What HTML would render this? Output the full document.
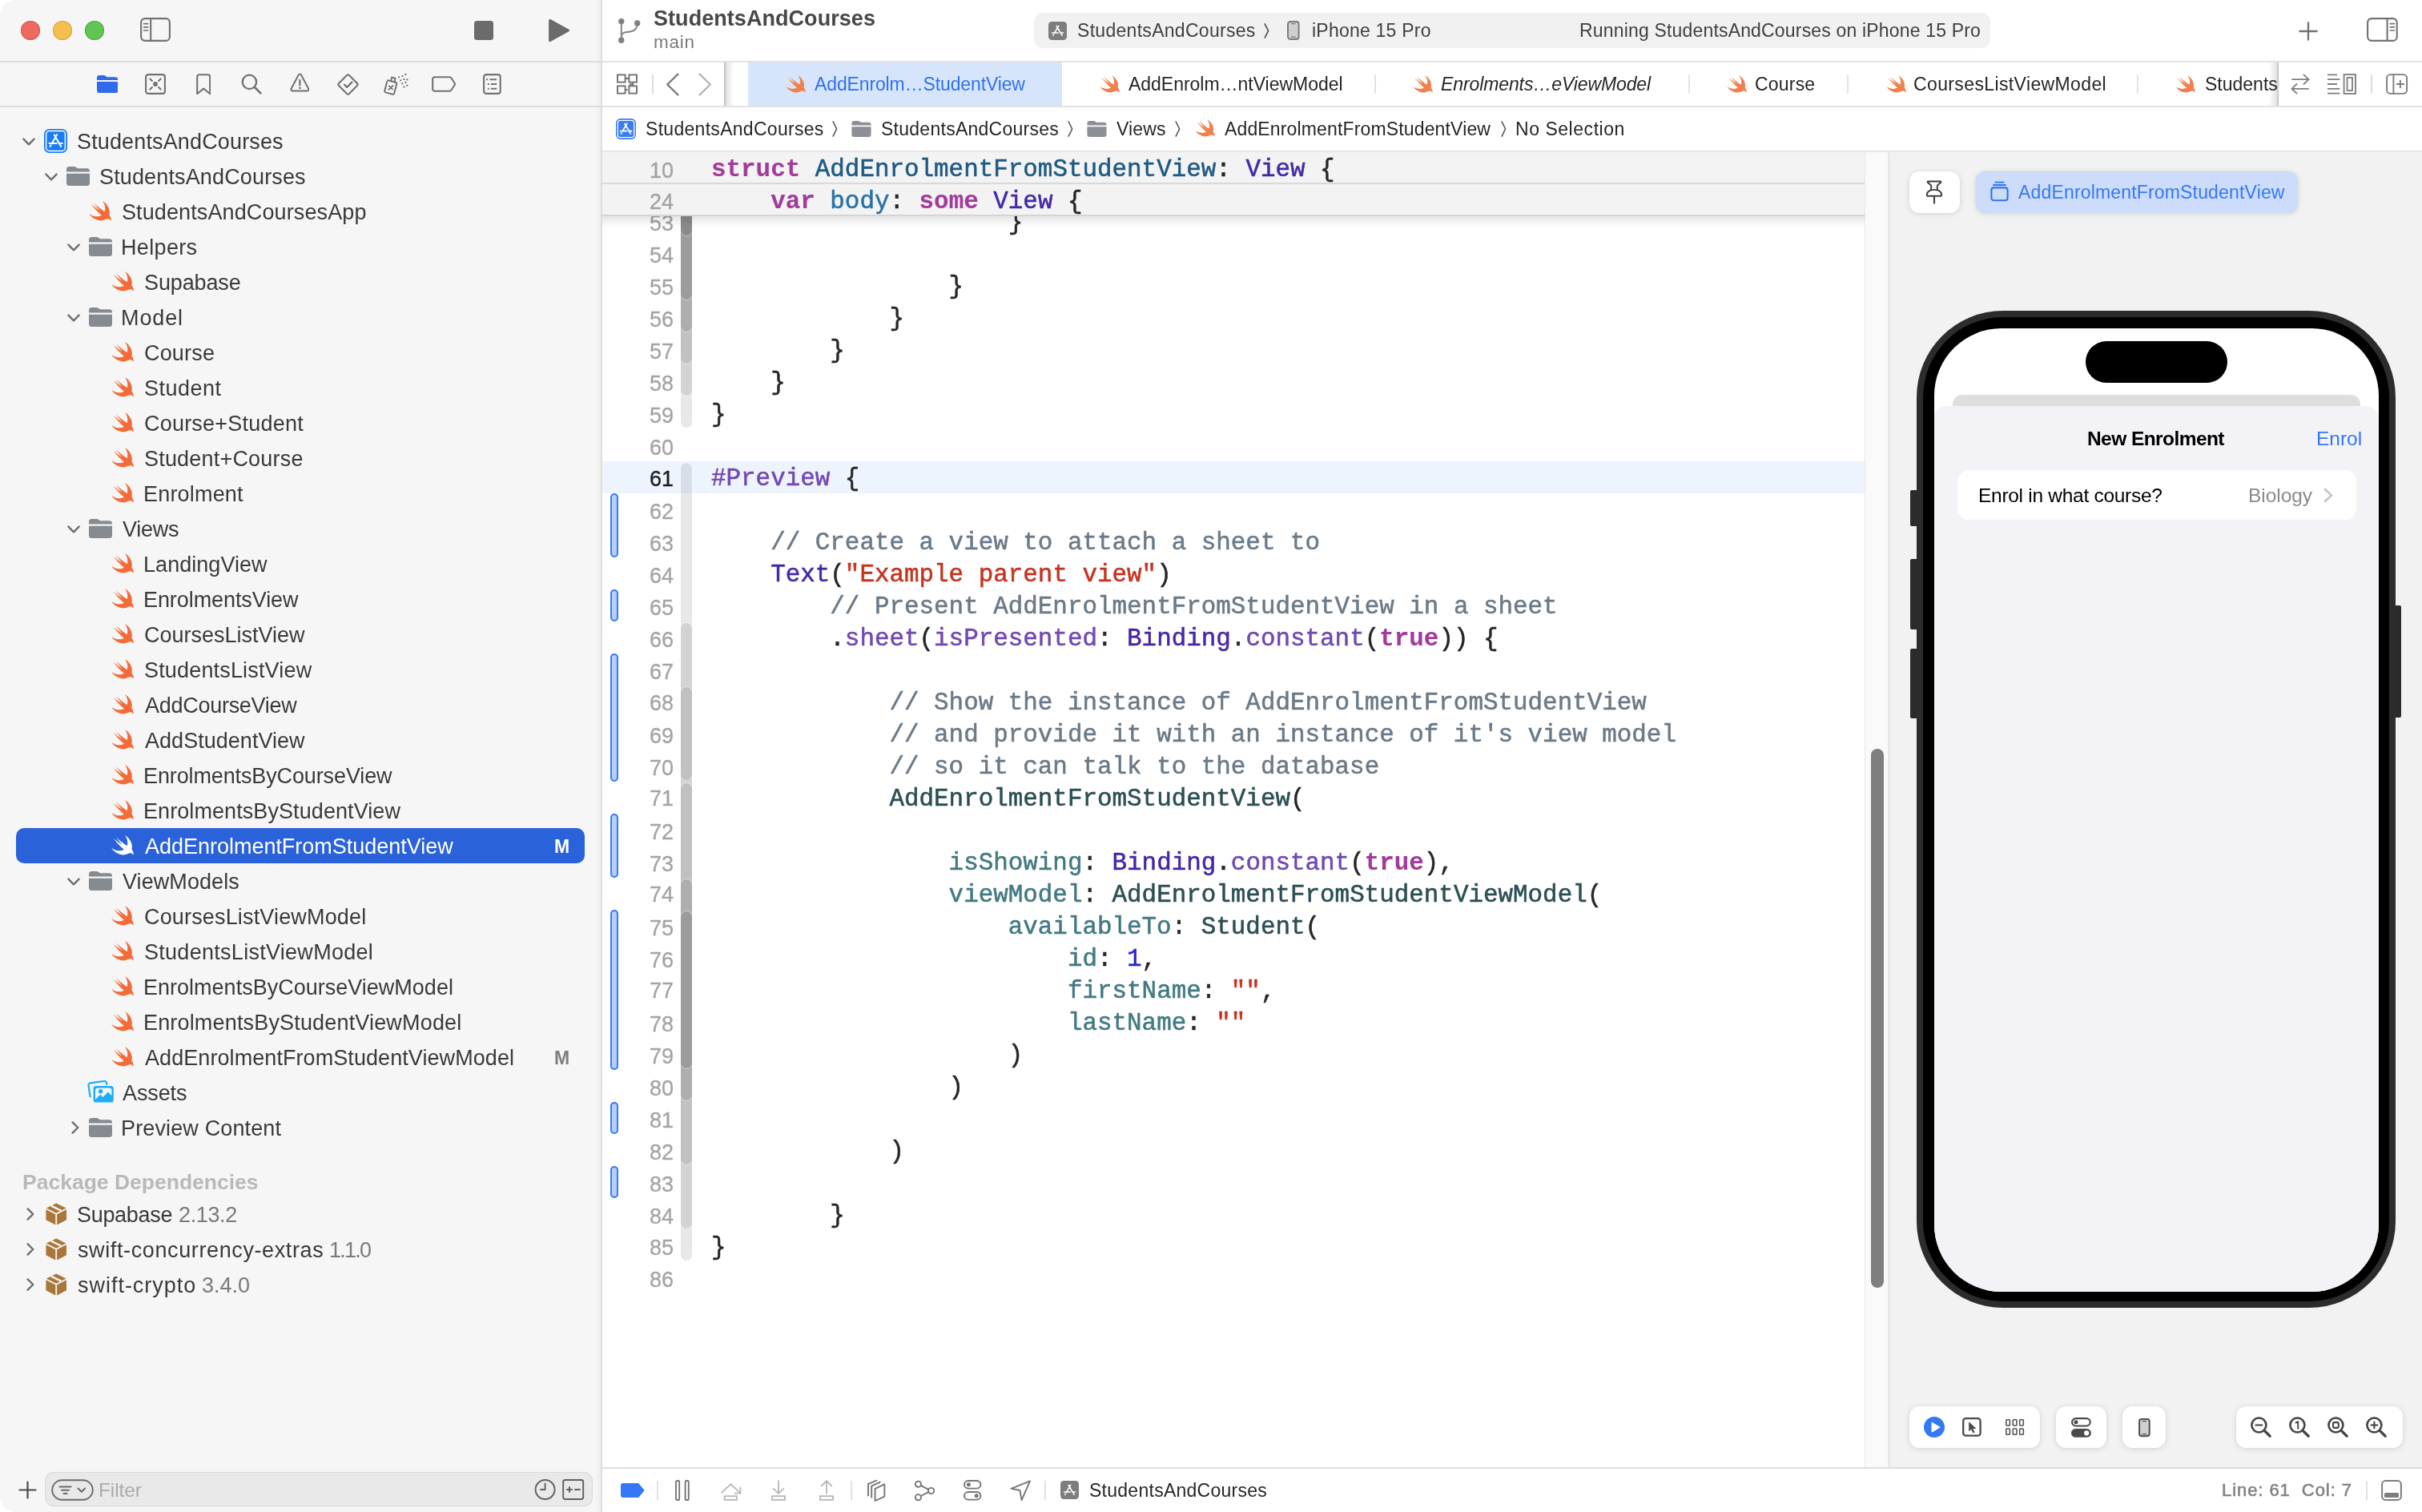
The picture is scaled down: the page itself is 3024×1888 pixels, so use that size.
<!DOCTYPE html>
<html lang="en"><head><meta charset="utf-8"><title>StudentsAndCourses — AddEnrolmentFromStudentView.swift</title>
<style>
html,body{margin:0;padding:0;background:#fff;}
body{width:3024px;height:1888px;overflow:hidden;position:relative;font-family:"Liberation Sans",sans-serif;-webkit-font-smoothing:antialiased;}
.b{position:absolute;display:block;}
.t{position:absolute;white-space:pre;will-change:transform;}
.code,.ln{will-change:transform;}
.code{position:absolute;left:888px;white-space:pre;font-family:"Liberation Mono",monospace;font-size:30.9px;line-height:40px;height:40px;color:#262626;-webkit-text-stroke:0.55px;}
.ln{position:absolute;width:89px;left:752px;text-align:right;font-size:27px;line-height:40px;height:40px;color:#a2a2a2;-webkit-text-stroke:0.35px;}
.kw{color:#a33b9b;font-weight:bold;-webkit-text-stroke:0.15px;}
.ty{color:#1f5a82;} .dc{color:#2a72a8;} .sc{color:#4628a5;} .fn{color:#7249b2;} .cm{color:#6b7a87;}
.st{color:#c53420;} .nu{color:#2b25cf;} .pt{color:#2b4f54;} .pf{color:#437a82;}
</style></head><body>

<div class="b" style="left:0px;top:0px;width:751px;height:1888px;background:#f6f6f6;border-radius:20px 0 0 20px;"></div>
<div class="b" style="left:743px;top:0px;width:8px;height:1888px;background:linear-gradient(to right,rgba(0,0,0,0),rgba(0,0,0,0.045));"></div>
<div class="b" style="left:750px;top:0px;width:2px;height:1888px;background:#dedede;"></div>
<div class="b" style="left:0px;top:76px;width:750px;height:2px;background:#dcdcdc;"></div>
<div class="b" style="left:0px;top:132px;width:750px;height:2px;background:#dcdcdc;"></div>
<div class="b" style="left:26px;top:26px;width:24px;height:24px;background:#ec6a5e;border-radius:50%;box-shadow:inset 0 0 0 1px #d5584d;"></div>
<div class="b" style="left:66px;top:26px;width:24px;height:24px;background:#f5bf4f;border-radius:50%;box-shadow:inset 0 0 0 1px #d8a23a;"></div>
<div class="b" style="left:106px;top:26px;width:24px;height:24px;background:#61c554;border-radius:50%;box-shadow:inset 0 0 0 1px #4fa93f;"></div>
<svg class="b" style="left:54.5px;top:161px" width="29" height="30" viewBox="0 0 29 30"><rect x="0" y="0" width="29" height="30" rx="6.5" fill="#1a7cf6"/><rect x="2.6" y="2.6" width="23.8" height="24.8" rx="4" fill="none" stroke="#fff" stroke-width="1.5"/><g fill="none" stroke="#fff" stroke-width="2" stroke-linecap="round"><path d="M16 7.2 9.6 18.4M8.4 20.6l-.8 1.4M12.8 7.4l8.4 14.6M6.4 18h9.4M19.6 18h3.2"/></g></svg>
<svg class="b" style="left:28px;top:172px" width="16" height="10" viewBox="0 0 16 10"><path fill="none" stroke="#6e6e6e" stroke-width="2.4" stroke-linecap="round" stroke-linejoin="round" d="M1.4 1.6 8 8.3l6.6-6.7"/></svg>
<div class="t " style="left:95.8px;top:161.4px;font-size:27px;line-height:32px;color:#3a3a3a;letter-spacing:0.142px;">StudentsAndCourses</div>
<svg class="b" style="left:83px;top:208px" width="29" height="24" viewBox="0 0 29 24"><path fill="#858b91" d="M3.5 0h6.2c1 0 1.7.3 2.5.9l1 .8c.5.4 1 .5 1.7.5H25.5A3.5 3.5 0 0 1 29 5.7V6.6H0V3.5A3.5 3.5 0 0 1 3.5 0zM0 8.8h29v11.7A3.5 3.5 0 0 1 25.5 24h-22A3.5 3.5 0 0 1 0 20.5z"/></svg>
<svg class="b" style="left:56px;top:216px" width="16" height="10" viewBox="0 0 16 10"><path fill="none" stroke="#6e6e6e" stroke-width="2.4" stroke-linecap="round" stroke-linejoin="round" d="M1.4 1.6 8 8.3l6.6-6.7"/></svg>
<div class="t " style="left:123.8px;top:205.4px;font-size:27px;line-height:32px;color:#3a3a3a;letter-spacing:0.142px;">StudentsAndCourses</div>
<svg class="b" style="left:110.8px;top:251px" width="28" height="25" viewBox="2.35 3.35 18.4 16.6" preserveAspectRatio="none"><path fill="#f26b38" d="M13.543 3.41c4.114 2.47 6.545 7.162 5.549 11.131-.024.093-.05.181-.076.272l.002.001c2.062 2.538 1.5 5.258 1.236 4.745-1.072-2.086-3.066-1.568-4.088-1.043a6.803 6.803 0 0 1-.281.158l-.02.012-.002.002c-2.115 1.123-4.957 1.205-7.812-.022a12.568 12.568 0 0 1-5.64-4.838c.649.48 1.35.902 2.097 1.252 3.019 1.414 6.051 1.311 8.197-.002C9.651 12.73 7.101 9.67 5.146 7.191a10.628 10.628 0 0 1-1.005-1.384c2.34 2.142 6.038 4.83 7.365 5.576C8.69 8.408 6.208 4.743 6.324 4.86c4.436 4.47 8.528 6.996 8.528 6.996.154.085.27.154.36.213.085-.215.16-.437.224-.668.708-2.588-.09-5.548-1.893-7.992z"/></svg>
<div class="t " style="left:151.8px;top:249.4px;font-size:27px;line-height:32px;color:#3a3a3a;letter-spacing:0.113px;">StudentsAndCoursesApp</div>
<svg class="b" style="left:111px;top:296px" width="29" height="24" viewBox="0 0 29 24"><path fill="#858b91" d="M3.5 0h6.2c1 0 1.7.3 2.5.9l1 .8c.5.4 1 .5 1.7.5H25.5A3.5 3.5 0 0 1 29 5.7V6.6H0V3.5A3.5 3.5 0 0 1 3.5 0zM0 8.8h29v11.7A3.5 3.5 0 0 1 25.5 24h-22A3.5 3.5 0 0 1 0 20.5z"/></svg>
<svg class="b" style="left:84px;top:304px" width="16" height="10" viewBox="0 0 16 10"><path fill="none" stroke="#6e6e6e" stroke-width="2.4" stroke-linecap="round" stroke-linejoin="round" d="M1.4 1.6 8 8.3l6.6-6.7"/></svg>
<div class="t " style="left:150.8px;top:293.4px;font-size:27px;line-height:32px;color:#3a3a3a;letter-spacing:0.343px;">Helpers</div>
<svg class="b" style="left:138.8px;top:339px" width="28" height="25" viewBox="2.35 3.35 18.4 16.6" preserveAspectRatio="none"><path fill="#f26b38" d="M13.543 3.41c4.114 2.47 6.545 7.162 5.549 11.131-.024.093-.05.181-.076.272l.002.001c2.062 2.538 1.5 5.258 1.236 4.745-1.072-2.086-3.066-1.568-4.088-1.043a6.803 6.803 0 0 1-.281.158l-.02.012-.002.002c-2.115 1.123-4.957 1.205-7.812-.022a12.568 12.568 0 0 1-5.64-4.838c.649.48 1.35.902 2.097 1.252 3.019 1.414 6.051 1.311 8.197-.002C9.651 12.73 7.101 9.67 5.146 7.191a10.628 10.628 0 0 1-1.005-1.384c2.34 2.142 6.038 4.83 7.365 5.576C8.69 8.408 6.208 4.743 6.324 4.86c4.436 4.47 8.528 6.996 8.528 6.996.154.085.27.154.36.213.085-.215.16-.437.224-.668.708-2.588-.09-5.548-1.893-7.992z"/></svg>
<div class="t " style="left:179.8px;top:337.4px;font-size:27px;line-height:32px;color:#3a3a3a;letter-spacing:-0.129px;">Supabase</div>
<svg class="b" style="left:111px;top:384px" width="29" height="24" viewBox="0 0 29 24"><path fill="#858b91" d="M3.5 0h6.2c1 0 1.7.3 2.5.9l1 .8c.5.4 1 .5 1.7.5H25.5A3.5 3.5 0 0 1 29 5.7V6.6H0V3.5A3.5 3.5 0 0 1 3.5 0zM0 8.8h29v11.7A3.5 3.5 0 0 1 25.5 24h-22A3.5 3.5 0 0 1 0 20.5z"/></svg>
<svg class="b" style="left:84px;top:392px" width="16" height="10" viewBox="0 0 16 10"><path fill="none" stroke="#6e6e6e" stroke-width="2.4" stroke-linecap="round" stroke-linejoin="round" d="M1.4 1.6 8 8.3l6.6-6.7"/></svg>
<div class="t " style="left:150.8px;top:381.4px;font-size:27px;line-height:32px;color:#3a3a3a;letter-spacing:0.894px;">Model</div>
<svg class="b" style="left:138.8px;top:427px" width="28" height="25" viewBox="2.35 3.35 18.4 16.6" preserveAspectRatio="none"><path fill="#f26b38" d="M13.543 3.41c4.114 2.47 6.545 7.162 5.549 11.131-.024.093-.05.181-.076.272l.002.001c2.062 2.538 1.5 5.258 1.236 4.745-1.072-2.086-3.066-1.568-4.088-1.043a6.803 6.803 0 0 1-.281.158l-.02.012-.002.002c-2.115 1.123-4.957 1.205-7.812-.022a12.568 12.568 0 0 1-5.64-4.838c.649.48 1.35.902 2.097 1.252 3.019 1.414 6.051 1.311 8.197-.002C9.651 12.73 7.101 9.67 5.146 7.191a10.628 10.628 0 0 1-1.005-1.384c2.34 2.142 6.038 4.83 7.365 5.576C8.69 8.408 6.208 4.743 6.324 4.86c4.436 4.47 8.528 6.996 8.528 6.996.154.085.27.154.36.213.085-.215.16-.437.224-.668.708-2.588-.09-5.548-1.893-7.992z"/></svg>
<div class="t " style="left:179.7px;top:425.4px;font-size:27px;line-height:32px;color:#3a3a3a;letter-spacing:0.178px;">Course</div>
<svg class="b" style="left:138.8px;top:471px" width="28" height="25" viewBox="2.35 3.35 18.4 16.6" preserveAspectRatio="none"><path fill="#f26b38" d="M13.543 3.41c4.114 2.47 6.545 7.162 5.549 11.131-.024.093-.05.181-.076.272l.002.001c2.062 2.538 1.5 5.258 1.236 4.745-1.072-2.086-3.066-1.568-4.088-1.043a6.803 6.803 0 0 1-.281.158l-.02.012-.002.002c-2.115 1.123-4.957 1.205-7.812-.022a12.568 12.568 0 0 1-5.64-4.838c.649.48 1.35.902 2.097 1.252 3.019 1.414 6.051 1.311 8.197-.002C9.651 12.73 7.101 9.67 5.146 7.191a10.628 10.628 0 0 1-1.005-1.384c2.34 2.142 6.038 4.83 7.365 5.576C8.69 8.408 6.208 4.743 6.324 4.86c4.436 4.47 8.528 6.996 8.528 6.996.154.085.27.154.36.213.085-.215.16-.437.224-.668.708-2.588-.09-5.548-1.893-7.992z"/></svg>
<div class="t " style="left:179.8px;top:469.4px;font-size:27px;line-height:32px;color:#3a3a3a;letter-spacing:0.472px;">Student</div>
<svg class="b" style="left:138.8px;top:515px" width="28" height="25" viewBox="2.35 3.35 18.4 16.6" preserveAspectRatio="none"><path fill="#f26b38" d="M13.543 3.41c4.114 2.47 6.545 7.162 5.549 11.131-.024.093-.05.181-.076.272l.002.001c2.062 2.538 1.5 5.258 1.236 4.745-1.072-2.086-3.066-1.568-4.088-1.043a6.803 6.803 0 0 1-.281.158l-.02.012-.002.002c-2.115 1.123-4.957 1.205-7.812-.022a12.568 12.568 0 0 1-5.64-4.838c.649.48 1.35.902 2.097 1.252 3.019 1.414 6.051 1.311 8.197-.002C9.651 12.73 7.101 9.67 5.146 7.191a10.628 10.628 0 0 1-1.005-1.384c2.34 2.142 6.038 4.83 7.365 5.576C8.69 8.408 6.208 4.743 6.324 4.86c4.436 4.47 8.528 6.996 8.528 6.996.154.085.27.154.36.213.085-.215.16-.437.224-.668.708-2.588-.09-5.548-1.893-7.992z"/></svg>
<div class="t " style="left:179.7px;top:513.4px;font-size:27px;line-height:32px;color:#3a3a3a;letter-spacing:0.213px;">Course+Student</div>
<svg class="b" style="left:138.8px;top:559px" width="28" height="25" viewBox="2.35 3.35 18.4 16.6" preserveAspectRatio="none"><path fill="#f26b38" d="M13.543 3.41c4.114 2.47 6.545 7.162 5.549 11.131-.024.093-.05.181-.076.272l.002.001c2.062 2.538 1.5 5.258 1.236 4.745-1.072-2.086-3.066-1.568-4.088-1.043a6.803 6.803 0 0 1-.281.158l-.02.012-.002.002c-2.115 1.123-4.957 1.205-7.812-.022a12.568 12.568 0 0 1-5.64-4.838c.649.48 1.35.902 2.097 1.252 3.019 1.414 6.051 1.311 8.197-.002C9.651 12.73 7.101 9.67 5.146 7.191a10.628 10.628 0 0 1-1.005-1.384c2.34 2.142 6.038 4.83 7.365 5.576C8.69 8.408 6.208 4.743 6.324 4.86c4.436 4.47 8.528 6.996 8.528 6.996.154.085.27.154.36.213.085-.215.16-.437.224-.668.708-2.588-.09-5.548-1.893-7.992z"/></svg>
<div class="t " style="left:179.8px;top:557.4px;font-size:27px;line-height:32px;color:#3a3a3a;letter-spacing:0.198px;">Student+Course</div>
<svg class="b" style="left:138.8px;top:603px" width="28" height="25" viewBox="2.35 3.35 18.4 16.6" preserveAspectRatio="none"><path fill="#f26b38" d="M13.543 3.41c4.114 2.47 6.545 7.162 5.549 11.131-.024.093-.05.181-.076.272l.002.001c2.062 2.538 1.5 5.258 1.236 4.745-1.072-2.086-3.066-1.568-4.088-1.043a6.803 6.803 0 0 1-.281.158l-.02.012-.002.002c-2.115 1.123-4.957 1.205-7.812-.022a12.568 12.568 0 0 1-5.64-4.838c.649.48 1.35.902 2.097 1.252 3.019 1.414 6.051 1.311 8.197-.002C9.651 12.73 7.101 9.67 5.146 7.191a10.628 10.628 0 0 1-1.005-1.384c2.34 2.142 6.038 4.83 7.365 5.576C8.69 8.408 6.208 4.743 6.324 4.86c4.436 4.47 8.528 6.996 8.528 6.996.154.085.27.154.36.213.085-.215.16-.437.224-.668.708-2.588-.09-5.548-1.893-7.992z"/></svg>
<div class="t " style="left:178.8px;top:601.4px;font-size:27px;line-height:32px;color:#3a3a3a;letter-spacing:0.185px;">Enrolment</div>
<svg class="b" style="left:111px;top:648px" width="29" height="24" viewBox="0 0 29 24"><path fill="#858b91" d="M3.5 0h6.2c1 0 1.7.3 2.5.9l1 .8c.5.4 1 .5 1.7.5H25.5A3.5 3.5 0 0 1 29 5.7V6.6H0V3.5A3.5 3.5 0 0 1 3.5 0zM0 8.8h29v11.7A3.5 3.5 0 0 1 25.5 24h-22A3.5 3.5 0 0 1 0 20.5z"/></svg>
<svg class="b" style="left:84px;top:656px" width="16" height="10" viewBox="0 0 16 10"><path fill="none" stroke="#6e6e6e" stroke-width="2.4" stroke-linecap="round" stroke-linejoin="round" d="M1.4 1.6 8 8.3l6.6-6.7"/></svg>
<div class="t " style="left:152.9px;top:645.4px;font-size:27px;line-height:32px;color:#3a3a3a;letter-spacing:-0.267px;">Views</div>
<svg class="b" style="left:138.8px;top:691px" width="28" height="25" viewBox="2.35 3.35 18.4 16.6" preserveAspectRatio="none"><path fill="#f26b38" d="M13.543 3.41c4.114 2.47 6.545 7.162 5.549 11.131-.024.093-.05.181-.076.272l.002.001c2.062 2.538 1.5 5.258 1.236 4.745-1.072-2.086-3.066-1.568-4.088-1.043a6.803 6.803 0 0 1-.281.158l-.02.012-.002.002c-2.115 1.123-4.957 1.205-7.812-.022a12.568 12.568 0 0 1-5.64-4.838c.649.48 1.35.902 2.097 1.252 3.019 1.414 6.051 1.311 8.197-.002C9.651 12.73 7.101 9.67 5.146 7.191a10.628 10.628 0 0 1-1.005-1.384c2.34 2.142 6.038 4.83 7.365 5.576C8.69 8.408 6.208 4.743 6.324 4.86c4.436 4.47 8.528 6.996 8.528 6.996.154.085.27.154.36.213.085-.215.16-.437.224-.668.708-2.588-.09-5.548-1.893-7.992z"/></svg>
<div class="t " style="left:178.8px;top:689.4px;font-size:27px;line-height:32px;color:#3a3a3a;letter-spacing:0.049px;">LandingView</div>
<svg class="b" style="left:138.8px;top:735px" width="28" height="25" viewBox="2.35 3.35 18.4 16.6" preserveAspectRatio="none"><path fill="#f26b38" d="M13.543 3.41c4.114 2.47 6.545 7.162 5.549 11.131-.024.093-.05.181-.076.272l.002.001c2.062 2.538 1.5 5.258 1.236 4.745-1.072-2.086-3.066-1.568-4.088-1.043a6.803 6.803 0 0 1-.281.158l-.02.012-.002.002c-2.115 1.123-4.957 1.205-7.812-.022a12.568 12.568 0 0 1-5.64-4.838c.649.48 1.35.902 2.097 1.252 3.019 1.414 6.051 1.311 8.197-.002C9.651 12.73 7.101 9.67 5.146 7.191a10.628 10.628 0 0 1-1.005-1.384c2.34 2.142 6.038 4.83 7.365 5.576C8.69 8.408 6.208 4.743 6.324 4.86c4.436 4.47 8.528 6.996 8.528 6.996.154.085.27.154.36.213.085-.215.16-.437.224-.668.708-2.588-.09-5.548-1.893-7.992z"/></svg>
<div class="t " style="left:178.8px;top:733.4px;font-size:27px;line-height:32px;color:#3a3a3a;letter-spacing:-0.080px;">EnrolmentsView</div>
<svg class="b" style="left:138.8px;top:779px" width="28" height="25" viewBox="2.35 3.35 18.4 16.6" preserveAspectRatio="none"><path fill="#f26b38" d="M13.543 3.41c4.114 2.47 6.545 7.162 5.549 11.131-.024.093-.05.181-.076.272l.002.001c2.062 2.538 1.5 5.258 1.236 4.745-1.072-2.086-3.066-1.568-4.088-1.043a6.803 6.803 0 0 1-.281.158l-.02.012-.002.002c-2.115 1.123-4.957 1.205-7.812-.022a12.568 12.568 0 0 1-5.64-4.838c.649.48 1.35.902 2.097 1.252 3.019 1.414 6.051 1.311 8.197-.002C9.651 12.73 7.101 9.67 5.146 7.191a10.628 10.628 0 0 1-1.005-1.384c2.34 2.142 6.038 4.83 7.365 5.576C8.69 8.408 6.208 4.743 6.324 4.86c4.436 4.47 8.528 6.996 8.528 6.996.154.085.27.154.36.213.085-.215.16-.437.224-.668.708-2.588-.09-5.548-1.893-7.992z"/></svg>
<div class="t " style="left:179.7px;top:777.4px;font-size:27px;line-height:32px;color:#3a3a3a;letter-spacing:-0.009px;">CoursesListView</div>
<svg class="b" style="left:138.8px;top:823px" width="28" height="25" viewBox="2.35 3.35 18.4 16.6" preserveAspectRatio="none"><path fill="#f26b38" d="M13.543 3.41c4.114 2.47 6.545 7.162 5.549 11.131-.024.093-.05.181-.076.272l.002.001c2.062 2.538 1.5 5.258 1.236 4.745-1.072-2.086-3.066-1.568-4.088-1.043a6.803 6.803 0 0 1-.281.158l-.02.012-.002.002c-2.115 1.123-4.957 1.205-7.812-.022a12.568 12.568 0 0 1-5.64-4.838c.649.48 1.35.902 2.097 1.252 3.019 1.414 6.051 1.311 8.197-.002C9.651 12.73 7.101 9.67 5.146 7.191a10.628 10.628 0 0 1-1.005-1.384c2.34 2.142 6.038 4.83 7.365 5.576C8.69 8.408 6.208 4.743 6.324 4.86c4.436 4.47 8.528 6.996 8.528 6.996.154.085.27.154.36.213.085-.215.16-.437.224-.668.708-2.588-.09-5.548-1.893-7.992z"/></svg>
<div class="t " style="left:179.8px;top:821.4px;font-size:27px;line-height:32px;color:#3a3a3a;letter-spacing:0.169px;">StudentsListView</div>
<svg class="b" style="left:138.8px;top:867px" width="28" height="25" viewBox="2.35 3.35 18.4 16.6" preserveAspectRatio="none"><path fill="#f26b38" d="M13.543 3.41c4.114 2.47 6.545 7.162 5.549 11.131-.024.093-.05.181-.076.272l.002.001c2.062 2.538 1.5 5.258 1.236 4.745-1.072-2.086-3.066-1.568-4.088-1.043a6.803 6.803 0 0 1-.281.158l-.02.012-.002.002c-2.115 1.123-4.957 1.205-7.812-.022a12.568 12.568 0 0 1-5.64-4.838c.649.48 1.35.902 2.097 1.252 3.019 1.414 6.051 1.311 8.197-.002C9.651 12.73 7.101 9.67 5.146 7.191a10.628 10.628 0 0 1-1.005-1.384c2.34 2.142 6.038 4.83 7.365 5.576C8.69 8.408 6.208 4.743 6.324 4.86c4.436 4.47 8.528 6.996 8.528 6.996.154.085.27.154.36.213.085-.215.16-.437.224-.668.708-2.588-.09-5.548-1.893-7.992z"/></svg>
<div class="t " style="left:180.9px;top:865.4px;font-size:27px;line-height:32px;color:#3a3a3a;letter-spacing:-0.276px;">AddCourseView</div>
<svg class="b" style="left:138.8px;top:911px" width="28" height="25" viewBox="2.35 3.35 18.4 16.6" preserveAspectRatio="none"><path fill="#f26b38" d="M13.543 3.41c4.114 2.47 6.545 7.162 5.549 11.131-.024.093-.05.181-.076.272l.002.001c2.062 2.538 1.5 5.258 1.236 4.745-1.072-2.086-3.066-1.568-4.088-1.043a6.803 6.803 0 0 1-.281.158l-.02.012-.002.002c-2.115 1.123-4.957 1.205-7.812-.022a12.568 12.568 0 0 1-5.64-4.838c.649.48 1.35.902 2.097 1.252 3.019 1.414 6.051 1.311 8.197-.002C9.651 12.73 7.101 9.67 5.146 7.191a10.628 10.628 0 0 1-1.005-1.384c2.34 2.142 6.038 4.83 7.365 5.576C8.69 8.408 6.208 4.743 6.324 4.86c4.436 4.47 8.528 6.996 8.528 6.996.154.085.27.154.36.213.085-.215.16-.437.224-.668.708-2.588-.09-5.548-1.893-7.992z"/></svg>
<div class="t " style="left:180.9px;top:909.4px;font-size:27px;line-height:32px;color:#3a3a3a;letter-spacing:0.031px;">AddStudentView</div>
<svg class="b" style="left:138.8px;top:955px" width="28" height="25" viewBox="2.35 3.35 18.4 16.6" preserveAspectRatio="none"><path fill="#f26b38" d="M13.543 3.41c4.114 2.47 6.545 7.162 5.549 11.131-.024.093-.05.181-.076.272l.002.001c2.062 2.538 1.5 5.258 1.236 4.745-1.072-2.086-3.066-1.568-4.088-1.043a6.803 6.803 0 0 1-.281.158l-.02.012-.002.002c-2.115 1.123-4.957 1.205-7.812-.022a12.568 12.568 0 0 1-5.64-4.838c.649.48 1.35.902 2.097 1.252 3.019 1.414 6.051 1.311 8.197-.002C9.651 12.73 7.101 9.67 5.146 7.191a10.628 10.628 0 0 1-1.005-1.384c2.34 2.142 6.038 4.83 7.365 5.576C8.69 8.408 6.208 4.743 6.324 4.86c4.436 4.47 8.528 6.996 8.528 6.996.154.085.27.154.36.213.085-.215.16-.437.224-.668.708-2.588-.09-5.548-1.893-7.992z"/></svg>
<div class="t " style="left:178.8px;top:953.4px;font-size:27px;line-height:32px;color:#3a3a3a;letter-spacing:-0.123px;">EnrolmentsByCourseView</div>
<svg class="b" style="left:138.8px;top:999px" width="28" height="25" viewBox="2.35 3.35 18.4 16.6" preserveAspectRatio="none"><path fill="#f26b38" d="M13.543 3.41c4.114 2.47 6.545 7.162 5.549 11.131-.024.093-.05.181-.076.272l.002.001c2.062 2.538 1.5 5.258 1.236 4.745-1.072-2.086-3.066-1.568-4.088-1.043a6.803 6.803 0 0 1-.281.158l-.02.012-.002.002c-2.115 1.123-4.957 1.205-7.812-.022a12.568 12.568 0 0 1-5.64-4.838c.649.48 1.35.902 2.097 1.252 3.019 1.414 6.051 1.311 8.197-.002C9.651 12.73 7.101 9.67 5.146 7.191a10.628 10.628 0 0 1-1.005-1.384c2.34 2.142 6.038 4.83 7.365 5.576C8.69 8.408 6.208 4.743 6.324 4.86c4.436 4.47 8.528 6.996 8.528 6.996.154.085.27.154.36.213.085-.215.16-.437.224-.668.708-2.588-.09-5.548-1.893-7.992z"/></svg>
<div class="t " style="left:178.8px;top:997.4px;font-size:27px;line-height:32px;color:#3a3a3a;letter-spacing:0.080px;">EnrolmentsByStudentView</div>
<div class="b" style="left:20px;top:1034px;width:710px;height:44px;background:#2962d9;border-radius:10px;"></div>
<svg class="b" style="left:138.8px;top:1043px" width="28" height="25" viewBox="2.35 3.35 18.4 16.6" preserveAspectRatio="none"><path fill="#fff" d="M13.543 3.41c4.114 2.47 6.545 7.162 5.549 11.131-.024.093-.05.181-.076.272l.002.001c2.062 2.538 1.5 5.258 1.236 4.745-1.072-2.086-3.066-1.568-4.088-1.043a6.803 6.803 0 0 1-.281.158l-.02.012-.002.002c-2.115 1.123-4.957 1.205-7.812-.022a12.568 12.568 0 0 1-5.64-4.838c.649.48 1.35.902 2.097 1.252 3.019 1.414 6.051 1.311 8.197-.002C9.651 12.73 7.101 9.67 5.146 7.191a10.628 10.628 0 0 1-1.005-1.384c2.34 2.142 6.038 4.83 7.365 5.576C8.69 8.408 6.208 4.743 6.324 4.86c4.436 4.47 8.528 6.996 8.528 6.996.154.085.27.154.36.213.085-.215.16-.437.224-.668.708-2.588-.09-5.548-1.893-7.992z"/></svg>
<div class="t " style="left:180.9px;top:1041.4px;font-size:27px;line-height:32px;color:#fff;letter-spacing:-0.020px;">AddEnrolmentFromStudentView</div>
<div class="t " style="left:692.0px;top:1043.0px;font-size:23px;line-height:28px;color:#fff;font-weight:700;">M</div>
<svg class="b" style="left:111px;top:1088px" width="29" height="24" viewBox="0 0 29 24"><path fill="#858b91" d="M3.5 0h6.2c1 0 1.7.3 2.5.9l1 .8c.5.4 1 .5 1.7.5H25.5A3.5 3.5 0 0 1 29 5.7V6.6H0V3.5A3.5 3.5 0 0 1 3.5 0zM0 8.8h29v11.7A3.5 3.5 0 0 1 25.5 24h-22A3.5 3.5 0 0 1 0 20.5z"/></svg>
<svg class="b" style="left:84px;top:1096px" width="16" height="10" viewBox="0 0 16 10"><path fill="none" stroke="#6e6e6e" stroke-width="2.4" stroke-linecap="round" stroke-linejoin="round" d="M1.4 1.6 8 8.3l6.6-6.7"/></svg>
<div class="t " style="left:152.9px;top:1085.4px;font-size:27px;line-height:32px;color:#3a3a3a;letter-spacing:0.080px;">ViewModels</div>
<svg class="b" style="left:138.8px;top:1131px" width="28" height="25" viewBox="2.35 3.35 18.4 16.6" preserveAspectRatio="none"><path fill="#f26b38" d="M13.543 3.41c4.114 2.47 6.545 7.162 5.549 11.131-.024.093-.05.181-.076.272l.002.001c2.062 2.538 1.5 5.258 1.236 4.745-1.072-2.086-3.066-1.568-4.088-1.043a6.803 6.803 0 0 1-.281.158l-.02.012-.002.002c-2.115 1.123-4.957 1.205-7.812-.022a12.568 12.568 0 0 1-5.64-4.838c.649.48 1.35.902 2.097 1.252 3.019 1.414 6.051 1.311 8.197-.002C9.651 12.73 7.101 9.67 5.146 7.191a10.628 10.628 0 0 1-1.005-1.384c2.34 2.142 6.038 4.83 7.365 5.576C8.69 8.408 6.208 4.743 6.324 4.86c4.436 4.47 8.528 6.996 8.528 6.996.154.085.27.154.36.213.085-.215.16-.437.224-.668.708-2.588-.09-5.548-1.893-7.992z"/></svg>
<div class="t " style="left:179.7px;top:1129.4px;font-size:27px;line-height:32px;color:#3a3a3a;letter-spacing:0.161px;">CoursesListViewModel</div>
<svg class="b" style="left:138.8px;top:1175px" width="28" height="25" viewBox="2.35 3.35 18.4 16.6" preserveAspectRatio="none"><path fill="#f26b38" d="M13.543 3.41c4.114 2.47 6.545 7.162 5.549 11.131-.024.093-.05.181-.076.272l.002.001c2.062 2.538 1.5 5.258 1.236 4.745-1.072-2.086-3.066-1.568-4.088-1.043a6.803 6.803 0 0 1-.281.158l-.02.012-.002.002c-2.115 1.123-4.957 1.205-7.812-.022a12.568 12.568 0 0 1-5.64-4.838c.649.48 1.35.902 2.097 1.252 3.019 1.414 6.051 1.311 8.197-.002C9.651 12.73 7.101 9.67 5.146 7.191a10.628 10.628 0 0 1-1.005-1.384c2.34 2.142 6.038 4.83 7.365 5.576C8.69 8.408 6.208 4.743 6.324 4.86c4.436 4.47 8.528 6.996 8.528 6.996.154.085.27.154.36.213.085-.215.16-.437.224-.668.708-2.588-.09-5.548-1.893-7.992z"/></svg>
<div class="t " style="left:179.8px;top:1173.4px;font-size:27px;line-height:32px;color:#3a3a3a;letter-spacing:0.282px;">StudentsListViewModel</div>
<svg class="b" style="left:138.8px;top:1219px" width="28" height="25" viewBox="2.35 3.35 18.4 16.6" preserveAspectRatio="none"><path fill="#f26b38" d="M13.543 3.41c4.114 2.47 6.545 7.162 5.549 11.131-.024.093-.05.181-.076.272l.002.001c2.062 2.538 1.5 5.258 1.236 4.745-1.072-2.086-3.066-1.568-4.088-1.043a6.803 6.803 0 0 1-.281.158l-.02.012-.002.002c-2.115 1.123-4.957 1.205-7.812-.022a12.568 12.568 0 0 1-5.64-4.838c.649.48 1.35.902 2.097 1.252 3.019 1.414 6.051 1.311 8.197-.002C9.651 12.73 7.101 9.67 5.146 7.191a10.628 10.628 0 0 1-1.005-1.384c2.34 2.142 6.038 4.83 7.365 5.576C8.69 8.408 6.208 4.743 6.324 4.86c4.436 4.47 8.528 6.996 8.528 6.996.154.085.27.154.36.213.085-.215.16-.437.224-.668.708-2.588-.09-5.548-1.893-7.992z"/></svg>
<div class="t " style="left:178.8px;top:1217.4px;font-size:27px;line-height:32px;color:#3a3a3a;letter-spacing:0.009px;">EnrolmentsByCourseViewModel</div>
<svg class="b" style="left:138.8px;top:1263px" width="28" height="25" viewBox="2.35 3.35 18.4 16.6" preserveAspectRatio="none"><path fill="#f26b38" d="M13.543 3.41c4.114 2.47 6.545 7.162 5.549 11.131-.024.093-.05.181-.076.272l.002.001c2.062 2.538 1.5 5.258 1.236 4.745-1.072-2.086-3.066-1.568-4.088-1.043a6.803 6.803 0 0 1-.281.158l-.02.012-.002.002c-2.115 1.123-4.957 1.205-7.812-.022a12.568 12.568 0 0 1-5.64-4.838c.649.48 1.35.902 2.097 1.252 3.019 1.414 6.051 1.311 8.197-.002C9.651 12.73 7.101 9.67 5.146 7.191a10.628 10.628 0 0 1-1.005-1.384c2.34 2.142 6.038 4.83 7.365 5.576C8.69 8.408 6.208 4.743 6.324 4.86c4.436 4.47 8.528 6.996 8.528 6.996.154.085.27.154.36.213.085-.215.16-.437.224-.668.708-2.588-.09-5.548-1.893-7.992z"/></svg>
<div class="t " style="left:178.8px;top:1261.4px;font-size:27px;line-height:32px;color:#3a3a3a;letter-spacing:0.168px;">EnrolmentsByStudentViewModel</div>
<svg class="b" style="left:138.8px;top:1307px" width="28" height="25" viewBox="2.35 3.35 18.4 16.6" preserveAspectRatio="none"><path fill="#f26b38" d="M13.543 3.41c4.114 2.47 6.545 7.162 5.549 11.131-.024.093-.05.181-.076.272l.002.001c2.062 2.538 1.5 5.258 1.236 4.745-1.072-2.086-3.066-1.568-4.088-1.043a6.803 6.803 0 0 1-.281.158l-.02.012-.002.002c-2.115 1.123-4.957 1.205-7.812-.022a12.568 12.568 0 0 1-5.64-4.838c.649.48 1.35.902 2.097 1.252 3.019 1.414 6.051 1.311 8.197-.002C9.651 12.73 7.101 9.67 5.146 7.191a10.628 10.628 0 0 1-1.005-1.384c2.34 2.142 6.038 4.83 7.365 5.576C8.69 8.408 6.208 4.743 6.324 4.86c4.436 4.47 8.528 6.996 8.528 6.996.154.085.27.154.36.213.085-.215.16-.437.224-.668.708-2.588-.09-5.548-1.893-7.992z"/></svg>
<div class="t " style="left:180.9px;top:1305.4px;font-size:27px;line-height:32px;color:#3a3a3a;letter-spacing:0.073px;">AddEnrolmentFromStudentViewModel</div>
<div class="t " style="left:692.0px;top:1307.0px;font-size:23px;line-height:28px;color:#7d7d7d;font-weight:700;">M</div>
<svg class="b" style="left:109px;top:1349px" width="34" height="29" viewBox="0 0 34 29"><path d="M3.6 20.4 1.5 6.4a2.6 2.6 0 0 1 2.2-3L21 1a2.600 2.600 0 0 1 3 2.200l.300 1.800" fill="none" stroke="#1eaef8" stroke-width="2.200" stroke-linejoin="round" stroke-linecap="round"/><rect x="7.600" y="7" width="25.200" height="20.600" rx="3.400" fill="#1eaef8"/><path d="M10 12.600a3.200 3.200 0 0 1 3.200-3.200h14a3.200 3.200 0 0 1 3.200 3.200v6.400l-4.600-4.600-6.200 6.600-3.400-3.200L10 24z" fill="#f6f6f6"/><circle cx="16.600" cy="13.800" r="2.700" fill="#1eaef8"/></svg>
<div class="t " style="left:152.9px;top:1349.4px;font-size:27px;line-height:32px;color:#3a3a3a;letter-spacing:-0.117px;">Assets</div>
<svg class="b" style="left:111px;top:1396px" width="29" height="24" viewBox="0 0 29 24"><path fill="#858b91" d="M3.5 0h6.2c1 0 1.7.3 2.5.9l1 .8c.5.4 1 .5 1.7.5H25.5A3.5 3.5 0 0 1 29 5.7V6.6H0V3.5A3.5 3.5 0 0 1 3.5 0zM0 8.8h29v11.7A3.5 3.5 0 0 1 25.5 24h-22A3.5 3.5 0 0 1 0 20.5z"/></svg>
<svg class="b" style="left:88.5px;top:1400px" width="10" height="16" viewBox="0 0 10 16"><path fill="none" stroke="#6e6e6e" stroke-width="2.4" stroke-linecap="round" stroke-linejoin="round" d="M1.6 1.4 8.3 8l-6.7 6.6"/></svg>
<div class="t " style="left:150.8px;top:1393.4px;font-size:27px;line-height:32px;color:#3a3a3a;letter-spacing:0.137px;">Preview Content</div>
<div class="t " style="left:27.7px;top:1460.3px;font-size:26.5px;line-height:32px;color:#b9b9b9;letter-spacing:0.000px;font-weight:700;">Package Dependencies</div>
<svg class="b" style="left:33px;top:1508px" width="10" height="16" viewBox="0 0 10 16"><path fill="none" stroke="#6e6e6e" stroke-width="2.4" stroke-linecap="round" stroke-linejoin="round" d="M1.6 1.4 8.3 8l-6.7 6.6"/></svg>
<svg class="b" style="left:56.800px;top:1502px" width="26.400" height="28.200" viewBox="0 0 28 30"><path fill="#aa773b" d="M14 0.400 0.800 7l13.200 6.600L27.200 7zM0.400 8.800v13.800l12.600 6.800V15.200zM27.600 8.800 15 15.200v14.200l12.600-6.800z"/><path d="M7.200 3.800 20.600 10.400" stroke="#f6f6f6" stroke-width="2.600"/></svg>
<div class="t " style="left:96.0px;top:1501.4px;font-size:27px;line-height:32px;color:#3a3a3a;letter-spacing:-0.315px;">Supabase</div>
<div class="t " style="left:223.2px;top:1501.4px;font-size:27px;line-height:32px;color:#7a7a7a;letter-spacing:-0.372px;">2.13.2</div>
<svg class="b" style="left:33px;top:1552px" width="10" height="16" viewBox="0 0 10 16"><path fill="none" stroke="#6e6e6e" stroke-width="2.4" stroke-linecap="round" stroke-linejoin="round" d="M1.6 1.4 8.3 8l-6.7 6.6"/></svg>
<svg class="b" style="left:56.800px;top:1546px" width="26.400" height="28.200" viewBox="0 0 28 30"><path fill="#aa773b" d="M14 0.400 0.800 7l13.200 6.600L27.200 7zM0.400 8.800v13.800l12.600 6.800V15.200zM27.600 8.800 15 15.200v14.200l12.600-6.800z"/><path d="M7.200 3.800 20.600 10.400" stroke="#f6f6f6" stroke-width="2.600"/></svg>
<div class="t " style="left:96.5px;top:1545.4px;font-size:27px;line-height:32px;color:#3a3a3a;letter-spacing:0.615px;">swift-concurrency-extras</div>
<div class="t " style="left:410.6px;top:1545.4px;font-size:27px;line-height:32px;color:#7a7a7a;letter-spacing:-1.742px;">1.1.0</div>
<svg class="b" style="left:33px;top:1596px" width="10" height="16" viewBox="0 0 10 16"><path fill="none" stroke="#6e6e6e" stroke-width="2.4" stroke-linecap="round" stroke-linejoin="round" d="M1.6 1.4 8.3 8l-6.7 6.6"/></svg>
<svg class="b" style="left:56.800px;top:1590px" width="26.400" height="28.200" viewBox="0 0 28 30"><path fill="#aa773b" d="M14 0.400 0.800 7l13.200 6.600L27.200 7zM0.400 8.800v13.800l12.600 6.800V15.200zM27.600 8.800 15 15.200v14.200l12.600-6.800z"/><path d="M7.200 3.800 20.600 10.400" stroke="#f6f6f6" stroke-width="2.600"/></svg>
<div class="t " style="left:96.5px;top:1589.4px;font-size:27px;line-height:32px;color:#3a3a3a;letter-spacing:0.976px;">swift-crypto</div>
<div class="t " style="left:251.7px;top:1589.4px;font-size:27px;line-height:32px;color:#7a7a7a;letter-spacing:0.004px;">3.4.0</div>
<svg class="b" style="left:23px;top:1849px" width="23" height="23" viewBox="0 0 23 23"><path d="M11.5 1.5v20M1.5 11.5h20" stroke="#4a4a4a" stroke-width="2.2" stroke-linecap="round"/></svg>
<div class="b" style="left:56px;top:1838px;width:684px;height:43px;background:#e9e9e9;border-radius:11px;box-shadow:inset 0 0 0 1px #d9d9d9;"></div>
<svg class="b" style="left:64px;top:1847px" width="54" height="27" viewBox="0 0 54 27"><rect x="1.2" y="1.2" width="50.6" height="24.6" rx="12.3" fill="none" stroke="#6b6b6b" stroke-width="1.9"/><path d="M10.5 9.5h14M13 13.8h9M15.5 18h4" stroke="#6b6b6b" stroke-width="2" stroke-linecap="round"/><path d="M33.5 11.5l4.3 4.3 4.3-4.3" fill="none" stroke="#6b6b6b" stroke-width="2" stroke-linecap="round" stroke-linejoin="round"/></svg>
<div class="t " style="left:122.8px;top:1845.5px;font-size:24.5px;line-height:29px;color:#ababab;letter-spacing:-0.092px;">Filter</div>
<svg class="b" style="left:667px;top:1846px" width="64" height="28" viewBox="0 0 64 28"><g fill="none" stroke="#5f5f5f" stroke-width="1.9" stroke-linecap="round"><circle cx="13.6" cy="14" r="12"/><path d="M13.6 6.5V14H8"/><rect x="36.2" y="2" width="25" height="24" rx="2.5"/><path d="M41 14h6M44 11v6M51 14h6"/></g></svg>
<div class="b" style="left:752px;top:0px;width:2272px;height:1888px;background:#fff;"></div>
<div class="b" style="left:752px;top:76px;width:2272px;height:2px;background:#e2e2e2;"></div>
<div class="b" style="left:752px;top:132px;width:2272px;height:2px;background:#e2e2e2;"></div>
<div class="b" style="left:752px;top:188px;width:2272px;height:2px;background:#e6e6e6;"></div>
<div class="t " style="left:816.2px;top:7.1px;font-size:27px;line-height:32px;color:#484848;letter-spacing:0.052px;font-weight:700;">StudentsAndCourses</div>
<div class="t " style="left:815.5px;top:38.7px;font-size:22.5px;line-height:27px;color:#7a7a7a;letter-spacing:0.719px;">main</div>
<div class="b" style="left:1291px;top:16px;width:1194px;height:44px;background:#f1f1f1;border-radius:11px;"></div>
<div class="t " style="left:1344.5px;top:24.0px;font-size:23px;line-height:28px;color:#3f3f3f;letter-spacing:0.294px;">StudentsAndCourses</div>
<div class="t " style="left:1638.4px;top:24.0px;font-size:23px;line-height:28px;color:#3f3f3f;letter-spacing:0.226px;">iPhone 15 Pro</div>
<div class="t " style="left:1972.1px;top:24.0px;font-size:23px;line-height:28px;color:#3f3f3f;letter-spacing:0.174px;">Running StudentsAndCourses on iPhone 15 Pro</div>
<div class="b" style="left:934px;top:78px;width:392px;height:54px;background:#d7e5fc;"></div>
<svg class="b" style="left:980.5px;top:94px" width="25" height="22" viewBox="2.35 3.35 18.4 16.6" preserveAspectRatio="none"><path fill="#f0804e" d="M13.543 3.41c4.114 2.47 6.545 7.162 5.549 11.131-.024.093-.05.181-.076.272l.002.001c2.062 2.538 1.5 5.258 1.236 4.745-1.072-2.086-3.066-1.568-4.088-1.043a6.803 6.803 0 0 1-.281.158l-.02.012-.002.002c-2.115 1.123-4.957 1.205-7.812-.022a12.568 12.568 0 0 1-5.64-4.838c.649.48 1.35.902 2.097 1.252 3.019 1.414 6.051 1.311 8.197-.002C9.651 12.73 7.101 9.67 5.146 7.191a10.628 10.628 0 0 1-1.005-1.384c2.34 2.142 6.038 4.83 7.365 5.576C8.69 8.408 6.208 4.743 6.324 4.86c4.436 4.47 8.528 6.996 8.528 6.996.154.085.27.154.36.213.085-.215.16-.437.224-.668.708-2.588-.09-5.548-1.893-7.992z"/></svg>
<div class="t " style="left:1016.9px;top:90.7px;font-size:23px;line-height:28px;color:#2f71ee;letter-spacing:-0.127px;">AddEnrolm…StudentView</div>
<svg class="b" style="left:1372.5px;top:94px" width="25" height="22" viewBox="2.35 3.35 18.4 16.6" preserveAspectRatio="none"><path fill="#f0804e" d="M13.543 3.41c4.114 2.47 6.545 7.162 5.549 11.131-.024.093-.05.181-.076.272l.002.001c2.062 2.538 1.5 5.258 1.236 4.745-1.072-2.086-3.066-1.568-4.088-1.043a6.803 6.803 0 0 1-.281.158l-.02.012-.002.002c-2.115 1.123-4.957 1.205-7.812-.022a12.568 12.568 0 0 1-5.64-4.838c.649.48 1.35.902 2.097 1.252 3.019 1.414 6.051 1.311 8.197-.002C9.651 12.73 7.101 9.67 5.146 7.191a10.628 10.628 0 0 1-1.005-1.384c2.34 2.142 6.038 4.83 7.365 5.576C8.69 8.408 6.208 4.743 6.324 4.86c4.436 4.47 8.528 6.996 8.528 6.996.154.085.27.154.36.213.085-.215.16-.437.224-.668.708-2.588-.09-5.548-1.893-7.992z"/></svg>
<div class="t " style="left:1408.9px;top:90.7px;font-size:23px;line-height:28px;color:#262626;letter-spacing:-0.023px;">AddEnrolm…ntViewModel</div>
<svg class="b" style="left:1764px;top:94px" width="25" height="22" viewBox="2.35 3.35 18.4 16.6" preserveAspectRatio="none"><path fill="#f0804e" d="M13.543 3.41c4.114 2.47 6.545 7.162 5.549 11.131-.024.093-.05.181-.076.272l.002.001c2.062 2.538 1.5 5.258 1.236 4.745-1.072-2.086-3.066-1.568-4.088-1.043a6.803 6.803 0 0 1-.281.158l-.02.012-.002.002c-2.115 1.123-4.957 1.205-7.812-.022a12.568 12.568 0 0 1-5.64-4.838c.649.48 1.35.902 2.097 1.252 3.019 1.414 6.051 1.311 8.197-.002C9.651 12.73 7.101 9.67 5.146 7.191a10.628 10.628 0 0 1-1.005-1.384c2.34 2.142 6.038 4.83 7.365 5.576C8.69 8.408 6.208 4.743 6.324 4.86c4.436 4.47 8.528 6.996 8.528 6.996.154.085.27.154.36.213.085-.215.16-.437.224-.668.708-2.588-.09-5.548-1.893-7.992z"/></svg>
<div class="t " style="left:1799.3px;top:90.7px;font-size:23px;line-height:28px;color:#262626;letter-spacing:-0.102px;font-style:italic;">Enrolments…eViewModel</div>
<svg class="b" style="left:2156px;top:94px" width="25" height="22" viewBox="2.35 3.35 18.4 16.6" preserveAspectRatio="none"><path fill="#f0804e" d="M13.543 3.41c4.114 2.47 6.545 7.162 5.549 11.131-.024.093-.05.181-.076.272l.002.001c2.062 2.538 1.5 5.258 1.236 4.745-1.072-2.086-3.066-1.568-4.088-1.043a6.803 6.803 0 0 1-.281.158l-.02.012-.002.002c-2.115 1.123-4.957 1.205-7.812-.022a12.568 12.568 0 0 1-5.64-4.838c.649.48 1.35.902 2.097 1.252 3.019 1.414 6.051 1.311 8.197-.002C9.651 12.73 7.101 9.67 5.146 7.191a10.628 10.628 0 0 1-1.005-1.384c2.34 2.142 6.038 4.83 7.365 5.576C8.69 8.408 6.208 4.743 6.324 4.86c4.436 4.47 8.528 6.996 8.528 6.996.154.085.27.154.36.213.085-.215.16-.437.224-.668.708-2.588-.09-5.548-1.893-7.992z"/></svg>
<div class="t " style="left:2191.3px;top:90.7px;font-size:23px;line-height:28px;color:#262626;letter-spacing:0.202px;">Course</div>
<svg class="b" style="left:2354.5px;top:94px" width="25" height="22" viewBox="2.35 3.35 18.4 16.6" preserveAspectRatio="none"><path fill="#f0804e" d="M13.543 3.41c4.114 2.47 6.545 7.162 5.549 11.131-.024.093-.05.181-.076.272l.002.001c2.062 2.538 1.5 5.258 1.236 4.745-1.072-2.086-3.066-1.568-4.088-1.043a6.803 6.803 0 0 1-.281.158l-.02.012-.002.002c-2.115 1.123-4.957 1.205-7.812-.022a12.568 12.568 0 0 1-5.64-4.838c.649.48 1.35.902 2.097 1.252 3.019 1.414 6.051 1.311 8.197-.002C9.651 12.73 7.101 9.67 5.146 7.191a10.628 10.628 0 0 1-1.005-1.384c2.34 2.142 6.038 4.83 7.365 5.576C8.69 8.408 6.208 4.743 6.324 4.86c4.436 4.47 8.528 6.996 8.528 6.996.154.085.27.154.36.213.085-.215.16-.437.224-.668.708-2.588-.09-5.548-1.893-7.992z"/></svg>
<div class="t " style="left:2388.8px;top:90.7px;font-size:23px;line-height:28px;color:#262626;letter-spacing:0.379px;">CoursesListViewModel</div>
<svg class="b" style="left:2716px;top:94px" width="25" height="22" viewBox="2.35 3.35 18.4 16.6" preserveAspectRatio="none"><path fill="#f0804e" d="M13.543 3.41c4.114 2.47 6.545 7.162 5.549 11.131-.024.093-.05.181-.076.272l.002.001c2.062 2.538 1.5 5.258 1.236 4.745-1.072-2.086-3.066-1.568-4.088-1.043a6.803 6.803 0 0 1-.281.158l-.02.012-.002.002c-2.115 1.123-4.957 1.205-7.812-.022a12.568 12.568 0 0 1-5.64-4.838c.649.48 1.35.902 2.097 1.252 3.019 1.414 6.051 1.311 8.197-.002C9.651 12.73 7.101 9.67 5.146 7.191a10.628 10.628 0 0 1-1.005-1.384c2.34 2.142 6.038 4.83 7.365 5.576C8.69 8.408 6.208 4.743 6.324 4.86c4.436 4.47 8.528 6.996 8.528 6.996.154.085.27.154.36.213.085-.215.16-.437.224-.668.708-2.588-.09-5.548-1.893-7.992z"/></svg>
<div class="t " style="left:2753.0px;top:90.7px;font-size:23px;line-height:28px;color:#262626;">Students</div>
<div class="b" style="left:1716px;top:93px;width:2px;height:24px;background:#e3e3e3;"></div>
<div class="b" style="left:2108px;top:93px;width:2px;height:24px;background:#e3e3e3;"></div>
<div class="b" style="left:2306px;top:93px;width:2px;height:24px;background:#e3e3e3;"></div>
<div class="b" style="left:2668px;top:93px;width:2px;height:24px;background:#e3e3e3;"></div>
<div class="b" style="left:2833px;top:78px;width:11px;height:54px;background:linear-gradient(to right,rgba(0,0,0,0),rgba(0,0,0,0.12));"></div>
<div class="b" style="left:2843px;top:78px;width:181px;height:54px;background:#fff;"></div>
<div class="b" style="left:2843px;top:78px;width:2px;height:54px;background:#c9c9c9;"></div>
<div class="b" style="left:752px;top:78px;width:152px;height:54px;background:#fff;"></div>
<div class="b" style="left:904px;top:78px;width:2px;height:54px;background:#c4c4c4;"></div>
<div class="b" style="left:906px;top:78px;width:10px;height:54px;background:linear-gradient(to right,rgba(0,0,0,0.12),rgba(0,0,0,0));"></div>
<div class="t " style="left:805.5px;top:147.0px;font-size:23px;line-height:28px;color:#262626;letter-spacing:0.294px;">StudentsAndCourses</div>
<div class="t " style="left:1099.5px;top:147.0px;font-size:23px;line-height:28px;color:#262626;letter-spacing:0.264px;">StudentsAndCourses</div>
<div class="t " style="left:1394.4px;top:147.0px;font-size:23px;line-height:28px;color:#262626;letter-spacing:0.118px;">Views</div>
<div class="t " style="left:1528.9px;top:147.0px;font-size:23px;line-height:28px;color:#262626;letter-spacing:0.148px;">AddEnrolmentFromStudentView</div>
<div class="t " style="left:1892.1px;top:147.0px;font-size:23px;line-height:28px;color:#262626;letter-spacing:0.539px;">No Selection</div>
<div class="b" style="left:752px;top:576px;width:1576px;height:40px;background:#edf4fe;"></div>
<div class="b" style="left:850px;top:256px;width:14px;height:278px;background:rgba(0,0,0,0.092);border-radius:0 0 7px 7px;box-shadow:0 0 0 1px rgba(255,255,255,0.35);"></div>
<div class="b" style="left:850px;top:256px;width:14px;height:238px;background:#d3d3d3;border-radius:0 0 7px 7px;box-shadow:0 0 0 1px rgba(255,255,255,0.35);"></div>
<div class="b" style="left:850px;top:256px;width:14px;height:198px;background:#c1c1c1;border-radius:0 0 7px 7px;box-shadow:0 0 0 1px rgba(255,255,255,0.35);"></div>
<div class="b" style="left:850px;top:256px;width:14px;height:158px;background:#aeaeae;border-radius:0 0 7px 7px;box-shadow:0 0 0 1px rgba(255,255,255,0.35);"></div>
<div class="b" style="left:850px;top:256px;width:14px;height:118px;background:#9c9c9c;border-radius:0 0 7px 7px;box-shadow:0 0 0 1px rgba(255,255,255,0.35);"></div>
<div class="b" style="left:850px;top:256px;width:14px;height:38px;background:#8b8b8b;border-radius:0 0 7px 7px;box-shadow:0 0 0 1px rgba(255,255,255,0.35);"></div>
<div class="b" style="left:850px;top:578px;width:14px;height:996px;background:rgba(0,0,0,0.092);border-radius:7px 7px 7px 7px;box-shadow:0 0 0 1px rgba(255,255,255,0.35);"></div>
<div class="b" style="left:850px;top:778px;width:14px;height:756px;background:#d3d3d3;border-radius:7px 7px 7px 7px;box-shadow:0 0 0 1px rgba(255,255,255,0.35);"></div>
<div class="b" style="left:850px;top:858px;width:14px;height:116px;background:#c1c1c1;border-radius:7px 7px 7px 7px;box-shadow:0 0 0 1px rgba(255,255,255,0.35);"></div>
<div class="b" style="left:850px;top:978px;width:14px;height:476px;background:#c1c1c1;border-radius:7px 7px 7px 7px;box-shadow:0 0 0 1px rgba(255,255,255,0.35);"></div>
<div class="b" style="left:850px;top:1098px;width:14px;height:276px;background:#aeaeae;border-radius:7px 7px 7px 7px;box-shadow:0 0 0 1px rgba(255,255,255,0.35);"></div>
<div class="b" style="left:850px;top:1138px;width:14px;height:196px;background:#9c9c9c;border-radius:7px 7px 7px 7px;box-shadow:0 0 0 1px rgba(255,255,255,0.35);"></div>
<div class="b" style="left:762px;top:616px;width:10px;height:80px;background:#b4cffc;border-radius:5px;box-shadow:inset 0 0 0 2px #3b7bf6;"></div>
<div class="b" style="left:762px;top:736px;width:10px;height:40px;background:#b4cffc;border-radius:5px;box-shadow:inset 0 0 0 2px #3b7bf6;"></div>
<div class="b" style="left:762px;top:816px;width:10px;height:160px;background:#b4cffc;border-radius:5px;box-shadow:inset 0 0 0 2px #3b7bf6;"></div>
<div class="b" style="left:762px;top:1016px;width:10px;height:80px;background:#b4cffc;border-radius:5px;box-shadow:inset 0 0 0 2px #3b7bf6;"></div>
<div class="b" style="left:762px;top:1136px;width:10px;height:200px;background:#b4cffc;border-radius:5px;box-shadow:inset 0 0 0 2px #3b7bf6;"></div>
<div class="b" style="left:762px;top:1376px;width:10px;height:40px;background:#b4cffc;border-radius:5px;box-shadow:inset 0 0 0 2px #3b7bf6;"></div>
<div class="b" style="left:762px;top:1456px;width:10px;height:40px;background:#b4cffc;border-radius:5px;box-shadow:inset 0 0 0 2px #3b7bf6;"></div>
<div class="ln" style="top:258.6px;color:#a4a4a4">53</div>
<div class="code" style="top:257.5px">                    }</div>
<div class="ln" style="top:298.6px;color:#a4a4a4">54</div>
<div class="ln" style="top:338.6px;color:#a4a4a4">55</div>
<div class="code" style="top:337.5px">                }</div>
<div class="ln" style="top:378.6px;color:#a4a4a4">56</div>
<div class="code" style="top:377.5px">            }</div>
<div class="ln" style="top:418.6px;color:#a4a4a4">57</div>
<div class="code" style="top:417.5px">        }</div>
<div class="ln" style="top:458.6px;color:#a4a4a4">58</div>
<div class="code" style="top:457.5px">    }</div>
<div class="ln" style="top:498.6px;color:#a4a4a4">59</div>
<div class="code" style="top:497.5px">}</div>
<div class="ln" style="top:538.6px;color:#a4a4a4">60</div>
<div class="ln" style="top:577.9px;color:#1f1f1f">61</div>
<div class="code" style="top:577.5px"><span class="fn">#Preview</span> {</div>
<div class="ln" style="top:618.6px;color:#a4a4a4">62</div>
<div class="ln" style="top:658.6px;color:#a4a4a4">63</div>
<div class="code" style="top:657.5px">    <span class="cm">// Create a view to attach a sheet to</span></div>
<div class="ln" style="top:698.6px;color:#a4a4a4">64</div>
<div class="code" style="top:697.5px">    <span class="sc">Text</span>(<span class="st">"Example parent view"</span>)</div>
<div class="ln" style="top:738.6px;color:#a4a4a4">65</div>
<div class="code" style="top:737.5px">        <span class="cm">// Present AddEnrolmentFromStudentView in a sheet</span></div>
<div class="ln" style="top:778.6px;color:#a4a4a4">66</div>
<div class="code" style="top:777.5px">        .<span class="fn">sheet</span>(<span class="fn">isPresented</span>: <span class="sc">Binding</span>.<span class="fn">constant</span>(<span class="kw">true</span>)) {</div>
<div class="ln" style="top:818.6px;color:#a4a4a4">67</div>
<div class="ln" style="top:857.7px;color:#a4a4a4">68</div>
<div class="code" style="top:857.5px">            <span class="cm">// Show the instance of AddEnrolmentFromStudentView</span></div>
<div class="ln" style="top:898.6px;color:#a4a4a4">69</div>
<div class="code" style="top:897.5px">            <span class="cm">// and provide it with an instance of it's view model</span></div>
<div class="ln" style="top:938.6px;color:#a4a4a4">70</div>
<div class="code" style="top:937.5px">            <span class="cm">// so it can talk to the database</span></div>
<div class="ln" style="top:976.9px;color:#a4a4a4">71</div>
<div class="code" style="top:977.5px">            <span class="pt">AddEnrolmentFromStudentView</span>(</div>
<div class="ln" style="top:1018.6px;color:#a4a4a4">72</div>
<div class="ln" style="top:1058.6px;color:#a4a4a4">73</div>
<div class="code" style="top:1057.5px">                <span class="pf">isShowing</span>: <span class="sc">Binding</span>.<span class="fn">constant</span>(<span class="kw">true</span>),</div>
<div class="ln" style="top:1097.2px;color:#a4a4a4">74</div>
<div class="code" style="top:1097.5px">                <span class="pf">viewModel</span>: <span class="pt">AddEnrolmentFromStudentViewModel</span>(</div>
<div class="ln" style="top:1138.6px;color:#a4a4a4">75</div>
<div class="code" style="top:1137.5px">                    <span class="pf">availableTo</span>: <span class="pt">Student</span>(</div>
<div class="ln" style="top:1178.6px;color:#a4a4a4">76</div>
<div class="code" style="top:1177.5px">                        <span class="pf">id</span>: <span class="nu">1</span>,</div>
<div class="ln" style="top:1216.9px;color:#a4a4a4">77</div>
<div class="code" style="top:1217.5px">                        <span class="pf">firstName</span>: <span class="st">""</span>,</div>
<div class="ln" style="top:1258.6px;color:#a4a4a4">78</div>
<div class="code" style="top:1257.5px">                        <span class="pf">lastName</span>: <span class="st">""</span></div>
<div class="ln" style="top:1298.6px;color:#a4a4a4">79</div>
<div class="code" style="top:1297.5px">                    )</div>
<div class="ln" style="top:1338.6px;color:#a4a4a4">80</div>
<div class="code" style="top:1337.5px">                )</div>
<div class="ln" style="top:1378.6px;color:#a4a4a4">81</div>
<div class="ln" style="top:1418.6px;color:#a4a4a4">82</div>
<div class="code" style="top:1417.5px">            )</div>
<div class="ln" style="top:1458.6px;color:#a4a4a4">83</div>
<div class="ln" style="top:1498.6px;color:#a4a4a4">84</div>
<div class="code" style="top:1497.5px">        }</div>
<div class="ln" style="top:1537.9px;color:#a4a4a4">85</div>
<div class="code" style="top:1537.5px">}</div>
<div class="ln" style="top:1577.7px;color:#a4a4a4">86</div>
<div class="b" style="left:752px;top:270px;width:1576px;height:14px;background:linear-gradient(to bottom,rgba(0,0,0,0.10),rgba(0,0,0,0));"></div>
<div class="b" style="left:752px;top:190px;width:1576px;height:78px;background:#f3f3f3;"></div>
<div class="b" style="left:752px;top:228px;width:1576px;height:2px;background:#d9d9d9;"></div>
<div class="b" style="left:752px;top:268px;width:1576px;height:2px;background:#d4d4d4;"></div>
<div class="ln" style="top:192.7px">10</div>
<div class="code" style="top:191.5px"><span class="kw">struct</span> <span class="ty">AddEnrolmentFromStudentView</span>: <span class="sc">View</span> {</div>
<div class="ln" style="top:232.3px">24</div>
<div class="code" style="top:232.1px">    <span class="kw">var</span> <span class="dc">body</span>: <span class="kw">some</span> <span class="sc">View</span> {</div>
<div class="b" style="left:2328px;top:190px;width:30px;height:1642px;background:#fafafa;"></div>
<div class="b" style="left:2328px;top:190px;width:1px;height:1642px;background:#e8e8e8;"></div>
<div class="b" style="left:2357px;top:190px;width:3px;height:1642px;background:#e9e9e9;"></div>
<div class="b" style="left:2336px;top:935px;width:16px;height:673px;background:#7f7f7f;border-radius:8px;"></div>
<div class="b" style="left:2360px;top:190px;width:664px;height:1642px;background:#f2f2f2;"></div>
<div class="b" style="left:2384px;top:214px;width:63px;height:52px;background:#fff;border-radius:12px;box-shadow:0 1px 7px rgba(0,0,0,0.13),0 0 1px rgba(0,0,0,0.12);"></div>
<div class="b" style="left:2467px;top:214px;width:402px;height:52px;background:#cddcfb;border-radius:12px;box-shadow:0 1px 7px rgba(0,0,0,0.13),0 0 1px rgba(0,0,0,0.12);"></div>
<div class="t " style="left:2519.9px;top:226.0px;font-size:23px;line-height:28px;color:#3478f6;letter-spacing:0.167px;">AddEnrolmentFromStudentView</div>
<div class="b" style="left:2385px;top:612px;width:9px;height:45px;background:#2b2b2b;border-radius:2px 0 0 2px;"></div>
<div class="b" style="left:2385px;top:698px;width:9px;height:88px;background:#2b2b2b;border-radius:2px 0 0 2px;"></div>
<div class="b" style="left:2385px;top:810px;width:9px;height:87px;background:#2b2b2b;border-radius:2px 0 0 2px;"></div>
<div class="b" style="left:2990px;top:756px;width:7.5px;height:140px;background:#2b2b2b;border-radius:0 2px 2px 0;"></div>
<div class="b" style="left:2393px;top:388px;width:598px;height:1245px;background:#2c2c2c;border-radius:108px;"></div>
<div class="b" style="left:2401px;top:396px;width:582px;height:1229px;background:#000;border-radius:100px;"></div>
<div class="b" style="left:2415px;top:410px;width:555px;height:1203px;border-radius:84px;background:#fff;overflow:hidden;">
<div class="b" style="left:23px;top:83px;width:509px;height:40px;border-radius:12px 12px 0 0;background:#dedede;"></div>
<div class="b" style="left:0;top:97px;width:555px;height:1110px;border-radius:16px 16px 0 0;background:#f2f2f7;"></div>
<div class="b" style="left:29px;top:177px;width:498px;height:62px;border-radius:14px;background:#fff;"></div>
</div>
<div class="b" style="left:2604px;top:426px;width:177px;height:52px;background:#000;border-radius:26px;"></div>
<div class="t " style="left:2606.3px;top:533.0px;font-size:24.5px;line-height:29px;color:#000;letter-spacing:-0.570px;font-weight:700;">New Enrolment</div>
<div class="t " style="left:2891.5px;top:533.0px;font-size:24.5px;line-height:29px;color:#3478f6;letter-spacing:-0.008px;">Enrol</div>
<div class="t " style="left:2469.5px;top:603.5px;font-size:24.5px;line-height:29px;color:#000;letter-spacing:-0.284px;">Enrol in what course?</div>
<div class="t " style="left:2807.0px;top:604.0px;font-size:24.5px;line-height:29px;color:#8a8a8e;letter-spacing:-0.046px;">Biology</div>
<svg class="b" style="left:2901px;top:609px" width="12" height="19" viewBox="0 0 12 19"><path d="M2 2l8 7.5L2 17" fill="none" stroke="#c4c4c7" stroke-width="2.6" stroke-linecap="round" stroke-linejoin="round"/></svg>
<div class="b" style="left:2384px;top:1756px;width:163px;height:52px;background:#fff;border-radius:12px;box-shadow:0 1px 7px rgba(0,0,0,0.13),0 0 1px rgba(0,0,0,0.12);"></div>
<div class="b" style="left:2567px;top:1756px;width:63px;height:52px;background:#fff;border-radius:12px;box-shadow:0 1px 7px rgba(0,0,0,0.13),0 0 1px rgba(0,0,0,0.12);"></div>
<div class="b" style="left:2650px;top:1756px;width:54px;height:52px;background:#fff;border-radius:12px;box-shadow:0 1px 7px rgba(0,0,0,0.13),0 0 1px rgba(0,0,0,0.12);"></div>
<div class="b" style="left:2792px;top:1756px;width:208px;height:52px;background:#fff;border-radius:12px;box-shadow:0 1px 7px rgba(0,0,0,0.13),0 0 1px rgba(0,0,0,0.12);"></div>
<div class="b" style="left:752px;top:1832px;width:2272px;height:2px;background:#dedede;"></div>
<div class="b" style="left:752px;top:1834px;width:2272px;height:54px;background:#fff;"></div>
<div class="t " style="left:1360.0px;top:1847.0px;font-size:23px;line-height:28px;color:#262626;letter-spacing:0.264px;">StudentsAndCourses</div>
<div class="t " style="left:2773.7px;top:1848.0px;font-size:22px;line-height:26px;color:#828282;letter-spacing:0.931px;-webkit-text-stroke:0.6px #828282;">Line: 61  Col: 7</div>
<svg class="b" style="left:175px;top:22px" width="38" height="30" viewBox="0 0 38 30"><g fill="none" stroke="#727272" stroke-width="2.1"><rect x="1.1" y="1.1" width="35.8" height="27.8" rx="5"/><path d="M13.2 1.1v27.8"/><path d="M4.6 7.6h5M4.6 11.8h5M4.6 16h5" stroke-width="1.7" stroke-linecap="round"/></g></svg>
<div class="b" style="left:592px;top:26px;width:24px;height:24px;background:#6b6b6b;border-radius:3.5px;"></div>
<svg class="b" style="left:684px;top:23px" width="28" height="30" viewBox="0 0 28 30"><path d="M2.6 2.4 25.6 15 2.6 27.6z" fill="#6b6b6b" stroke="#6b6b6b" stroke-width="3" stroke-linejoin="round"/></svg>
<svg class="b" style="left:120.7px;top:93.8px" width="26.2" height="22.3" viewBox="0 0 26.6 22.6"><path fill="#2f6bea" d="M3.2 0h5.3c1 0 1.6.3 2.4.8l1.2.9c.5.4 1 .5 1.7.5h9.6A3.2 3.2 0 0 1 26.6 5.4V6H0V3.2A3.2 3.2 0 0 1 3.2 0zM0 8.2h26.6v11.2a3.2 3.2 0 0 1-3.2 3.2H3.2A3.2 3.2 0 0 1 0 19.4z"/></svg>
<svg class="b" style="left:181px;top:92px" width="26" height="26" viewBox="0 0 26 26"><g fill="none" stroke="#727272" stroke-width="2.1" stroke-linecap="round"><rect x="1.1" y="1.1" width="23.8" height="23.8" rx="3"/><path d="M6.400 6.400l2.500 2.500M19.600 6.400l-2.500 2.500M6.400 19.600l2.500-2.500M19.600 19.600l-2.500-2.500"/></g><circle cx="13" cy="13" r="2.900" fill="#727272"/></svg>
<svg class="b" style="left:244.6px;top:92px" width="18.4" height="27" viewBox="0 0 18.4 27"><path d="M1.2 3.6a2.4 2.4 0 0 1 2.4-2.4h11.2a2.4 2.4 0 0 1 2.4 2.4v21.6L9.2 18.6 1.2 25.2z" fill="none" stroke="#727272" stroke-width="2.1" stroke-linejoin="round"/></svg>
<svg class="b" style="left:301px;top:92px" width="26" height="26" viewBox="0 0 26 26"><g fill="none" stroke="#727272" stroke-width="2.3" stroke-linecap="round"><circle cx="10.4" cy="10.4" r="8.7"/><path d="M17 17l7.4 7.4" stroke-width="2.7"/></g></svg>
<svg class="b" style="left:361.6px;top:91.3px" width="24.8" height="24.8" viewBox="0 0 26 26"><path d="M11.3 2.6a1.9 1.9 0 0 1 3.4 0l9.6 18.2a1.9 1.9 0 0 1-1.7 2.8H3.4a1.9 1.9 0 0 1-1.7-2.8z" fill="none" stroke="#727272" stroke-width="2.1" stroke-linejoin="round"/><path d="M13 9.2v7" stroke="#727272" stroke-width="2.3" stroke-linecap="round"/><circle cx="13" cy="19.8" r="1.4" fill="#727272"/></svg>
<svg class="b" style="left:420.5px;top:91.5px" width="27" height="27" viewBox="0 0 27 27"><g fill="none" stroke="#727272" stroke-width="2.1" stroke-linejoin="round" stroke-linecap="round"><path d="M12 2.1a2.2 2.2 0 0 1 3 0l9.9 9.9a2.2 2.2 0 0 1 0 3l-9.9 9.9a2.2 2.2 0 0 1-3 0L2.1 15a2.2 2.2 0 0 1 0-3z"/><path d="M9 13.8l3.2 3.2 6.2-6.4" stroke-width="2.3"/></g></svg>
<svg class="b" style="left:479px;top:91px" width="31" height="28" viewBox="0 0 31 28"><g fill="none" stroke="#727272" stroke-width="2" stroke-linejoin="round" stroke-linecap="round"><path d="M5.2 9.2l9.6 2.6a2 2 0 0 1 1.4 2.4L13.2 25.6a1.6 1.6 0 0 1-2 1.1L2.4 24.4a1.6 1.6 0 0 1-1.1-2L4.2 10.9"/><path d="M9 10.2l1.2-4.6 4.4 1.2-1.2 4.6"/><path d="M6.8 16.4l4.2 4M11.6 16l-5.2 4.8" stroke-width="1.8"/></g><g fill="#727272"><rect x="18" y="4.4" width="2" height="2"/><rect x="22.4" y="3" width="2" height="2"/><rect x="26.4" y="1" width="2" height="2"/><rect x="20.2" y="8.4" width="2" height="2"/><rect x="24.4" y="7" width="2" height="2"/><rect x="28.4" y="7.4" width="2" height="2"/><rect x="22.2" y="12.4" width="2" height="2"/><rect x="26.4" y="11" width="2" height="2"/><rect x="24.4" y="16.4" width="2" height="2"/><rect x="28.4" y="14.8" width="2" height="2"/></g></svg>
<svg class="b" style="left:538.5px;top:95px" width="31" height="20" viewBox="0 0 31 20"><path d="M3.6 1.2h18.6c1 0 1.7.4 2.3 1.3l4.6 7a1 1 0 0 1 0 1l-4.6 7c-.6.9-1.3 1.3-2.3 1.3H3.6a2.4 2.4 0 0 1-2.4-2.4V3.6a2.4 2.4 0 0 1 2.4-2.4z" fill="none" stroke="#727272" stroke-width="2.1" stroke-linejoin="round"/></svg>
<svg class="b" style="left:602.5px;top:92px" width="23" height="26" viewBox="0 0 23 26"><g fill="none" stroke="#727272" stroke-width="2.1" stroke-linecap="round"><rect x="1.1" y="1.1" width="20.6" height="23.8" rx="3"/><path d="M8.400 7.200h8.800M10 13h7.200M10 18.800h7.200" stroke-width="2" stroke-linecap="butt"/></g><g fill="#727272"><rect x="4.200" y="6.200" width="2" height="2"/><rect x="5.800" y="12" width="2" height="2"/><rect x="5.800" y="17.800" width="2" height="2"/></g></svg>
<svg class="b" style="left:771px;top:22px" width="30" height="33" viewBox="0 0 30 33"><g fill="none" stroke="#808080" stroke-width="1.9" stroke-linecap="round"><path d="M4.8 5v23"/><path d="M24.700 7C24.700 13 22 16.400 17 17.300 12 18.200 5.600 17.600 4.800 23"/></g><g fill="#808080"><circle cx="4.8" cy="4.6" r="3.7"/><circle cx="24.7" cy="6.9" r="3.7"/><circle cx="4.8" cy="28.2" r="3.7"/></g></svg>
<svg class="b" style="left:1309px;top:27px" width="23" height="23" viewBox="0 0 23 23"><rect width="23" height="23" rx="4.2" fill="#7d7d7d"/><g fill="none" stroke="#fff" stroke-width="1.6" stroke-linecap="round"><path d="M12.7 5.3 7.3 14.6M6.3 16.3l-.6 1M10.1 5.5l7.1 11.8M4.5 14h8M15.4 14h3.2"/></g></svg>
<svg class="b" style="left:1577.5px;top:29px" width="7" height="19" viewBox="0 0 7 19"><path d="M1.2 1 5.6 9.5 1.2 18" fill="none" stroke="#5a5a5a" stroke-width="1.7" stroke-linecap="round" stroke-linejoin="round"/></svg>
<svg class="b" style="left:1607px;top:26px" width="16" height="24" viewBox="0 0 16 24"><rect x="1" y="1" width="13.6" height="22" rx="3" fill="#cfcfcf" stroke="#7a7a7a" stroke-width="1.9"/><path d="M5.6 3.6h4.4M5.4 20.2h4.8" stroke="#7a7a7a" stroke-width="1.3" stroke-linecap="round"/></svg>
<svg class="b" style="left:2870px;top:26.5px" width="24" height="24" viewBox="0 0 24 24"><path d="M12 1.4v21.2M1.4 12h21.2" stroke="#727272" stroke-width="2.4" stroke-linecap="round"/></svg>
<svg class="b" style="left:2955px;top:22px" width="39" height="30" viewBox="0 0 39 30"><g fill="none" stroke="#727272" stroke-width="2.1"><rect x="1.1" y="1.1" width="36.6" height="27.8" rx="5"/><path d="M25.6 1.1v27.8"/><path d="M29.4 7.6h5M29.4 11.8h5M29.4 16h5" stroke-width="1.7" stroke-linecap="round"/></g></svg>
<svg class="b" style="left:770px;top:92px" width="27" height="26" viewBox="0 0 27 26"><g fill="none" stroke="#727272" stroke-width="1.9"><rect x="1" y="1.4" width="9.6" height="9.2"/><rect x="15.4" y="1.4" width="9.6" height="9.2"/><rect x="1" y="15.4" width="9.6" height="9.2"/><rect x="15.4" y="15.4" width="9.6" height="9.2"/><path d="M10.6 6h4.8M20.2 10.6v4.8M10.6 20h3M17 15.4v-2.2h3.2"/></g></svg>
<div class="b" style="left:814px;top:93px;width:2px;height:24px;background:#dcdcdc;"></div>
<svg class="b" style="left:831px;top:90.5px" width="18" height="29" viewBox="0 0 18 29"><path d="M15.4 1.6 2.2 14.5l13.2 12.9" fill="none" stroke="#7a7a7a" stroke-width="2.3" stroke-linecap="round" stroke-linejoin="round"/></svg>
<svg class="b" style="left:871px;top:90.5px" width="18" height="29" viewBox="0 0 18 29"><path d="M2.6 1.6 15.8 14.5 2.6 27.4" fill="none" stroke="#b4b4b4" stroke-width="2.3" stroke-linecap="round" stroke-linejoin="round"/></svg>
<svg class="b" style="left:2859px;top:92px" width="26" height="26" viewBox="0 0 26 26"><g fill="none" stroke="#7d7d7d" stroke-width="1.8" stroke-linecap="round" stroke-linejoin="round"><path d="M3 7.2h20.6M17.4 1.4l6.2 5.8-6.2 5.8"/><path d="M23 18.8H2.4M8.6 13l-6.2 5.8 6.2 5.8"/></g></svg>
<svg class="b" style="left:2905px;top:92px" width="38" height="26" viewBox="0 0 38 26"><g fill="none" stroke="#7d7d7d" stroke-width="1.8"><path d="M1 1.4h12M1 7.2h15.4M1 13h12M1 18.8h15.4M1 24.6h15.4"/><rect x="21.6" y="1" width="14.4" height="24" /><rect x="25.6" y="5" width="6.4" height="16"/></g></svg>
<div class="b" style="left:2960px;top:93px;width:2px;height:24px;background:#dcdcdc;"></div>
<svg class="b" style="left:2979px;top:92px" width="28" height="26" viewBox="0 0 28 26"><g fill="none" stroke="#7d7d7d" stroke-width="1.9" stroke-linecap="round"><rect x="1.1" y="1.1" width="25" height="23.8" rx="4.4"/><path d="M9.4 1.1v23.8M13.6 13h8.6M17.9 8.7v8.6"/></g></svg>
<svg class="b" style="left:769px;top:147.5px" width="25" height="26" viewBox="0 0 29 30"><rect x="0" y="0" width="29" height="30" rx="6.5" fill="#3b7cf0"/><rect x="2.6" y="2.6" width="23.8" height="24.8" rx="4" fill="none" stroke="#fff" stroke-width="1.5"/><g fill="none" stroke="#fff" stroke-width="2" stroke-linecap="round"><path d="M16 7.2 9.6 18.4M8.4 20.6l-.8 1.4M12.8 7.4l8.4 14.6M6.4 18h9.4M19.6 18h3.2"/></g></svg>
<svg class="b" style="left:1038.5px;top:151px" width="7" height="20" viewBox="0 0 7 20"><path d="M1.2 1 5.6 10.0 1.2 19" fill="none" stroke="#5a5a5a" stroke-width="1.7" stroke-linecap="round" stroke-linejoin="round"/></svg>
<svg class="b" style="left:1333px;top:151px" width="7" height="20" viewBox="0 0 7 20"><path d="M1.2 1 5.6 10.0 1.2 19" fill="none" stroke="#5a5a5a" stroke-width="1.7" stroke-linecap="round" stroke-linejoin="round"/></svg>
<svg class="b" style="left:1467px;top:151px" width="7" height="20" viewBox="0 0 7 20"><path d="M1.2 1 5.6 10.0 1.2 19" fill="none" stroke="#5a5a5a" stroke-width="1.7" stroke-linecap="round" stroke-linejoin="round"/></svg>
<svg class="b" style="left:1873.5px;top:151px" width="7" height="20" viewBox="0 0 7 20"><path d="M1.2 1 5.6 10.0 1.2 19" fill="none" stroke="#5a5a5a" stroke-width="1.7" stroke-linecap="round" stroke-linejoin="round"/></svg>
<svg class="b" style="left:1063px;top:150.5px" width="25" height="20" viewBox="0 0 29 24"><path fill="#8c9096" d="M3.5 0h6.2c1 0 1.7.3 2.5.9l1 .8c.5.4 1 .5 1.7.5H25.5A3.5 3.5 0 0 1 29 5.7V6.6H0V3.5A3.5 3.5 0 0 1 3.5 0zM0 8.8h29v11.7A3.5 3.5 0 0 1 25.5 24h-22A3.5 3.5 0 0 1 0 20.5z"/></svg>
<svg class="b" style="left:1357px;top:150.5px" width="25" height="20" viewBox="0 0 29 24"><path fill="#8c9096" d="M3.5 0h6.2c1 0 1.7.3 2.5.9l1 .8c.5.4 1 .5 1.7.5H25.5A3.5 3.5 0 0 1 29 5.7V6.6H0V3.5A3.5 3.5 0 0 1 3.5 0zM0 8.8h29v11.7A3.5 3.5 0 0 1 25.5 24h-22A3.5 3.5 0 0 1 0 20.5z"/></svg>
<svg class="b" style="left:1491.5px;top:149px" width="25" height="22" viewBox="2.35 3.35 18.4 16.6" preserveAspectRatio="none"><path fill="#f0804e" d="M13.543 3.41c4.114 2.47 6.545 7.162 5.549 11.131-.024.093-.05.181-.076.272l.002.001c2.062 2.538 1.5 5.258 1.236 4.745-1.072-2.086-3.066-1.568-4.088-1.043a6.803 6.803 0 0 1-.281.158l-.02.012-.002.002c-2.115 1.123-4.957 1.205-7.812-.022a12.568 12.568 0 0 1-5.64-4.838c.649.48 1.35.902 2.097 1.252 3.019 1.414 6.051 1.311 8.197-.002C9.651 12.73 7.101 9.67 5.146 7.191a10.628 10.628 0 0 1-1.005-1.384c2.34 2.142 6.038 4.83 7.365 5.576C8.69 8.408 6.208 4.743 6.324 4.86c4.436 4.47 8.528 6.996 8.528 6.996.154.085.27.154.36.213.085-.215.16-.437.224-.668.708-2.588-.09-5.548-1.893-7.992z"/></svg>
<svg class="b" style="left:2405px;top:225px" width="21" height="30" viewBox="0 0 21 30"><g fill="none" stroke="#3e3e3e" stroke-width="2" stroke-linejoin="round" stroke-linecap="round"><path d="M2.6 1.4h14.8c.9 0 1.2.9.6 1.5l-3.6 3.2c-.5.5-.7 1-.7 1.7l.3 4.4c3 1 5 3.400 5.200 6.2.1.900-.4 1.400-1.200 1.400H2c-.8 0-1.300-.5-1.200-1.400.2-2.800 2.200-5.200 5.200-6.200l.3-4.400c0-.7-.2-1.200-.7-1.700L2 2.900c-.6-.6-.3-1.500.6-1.500z"/><path d="M6.200 12.400c1.200-.4 2.400-.6 3.800-.6s2.600.2 3.800.6" stroke-width="1.7"/><path d="M10 20v8.600" stroke-width="2.1"/></g></svg>
<svg class="b" style="left:2484.5px;top:226px" width="24" height="26" viewBox="0 0 24 26"><g fill="none" stroke="#2f74f3" stroke-linecap="round"><rect x="1.400" y="8.400" width="20.200" height="15.800" rx="3" stroke-width="2.100"/><path d="M4 5h15" stroke-width="1.900"/><path d="M6.200 1.600h10.600" stroke-width="1.700"/></g></svg>
<div class="b" style="left:2402px;top:1769px;width:26.4px;height:26.4px;background:#3478f6;border-radius:50%;"></div>
<svg class="b" style="left:2402px;top:1769px" width="27" height="27" viewBox="0 0 27 27"><path d="M10.200 7.600v11.200l9.400-5.600z" fill="#fff" stroke="#fff" stroke-width="1.400" stroke-linejoin="round"/></svg>
<svg class="b" style="left:2450px;top:1770px" width="24" height="24" viewBox="0 0 24 24"><rect x="1.200" y="1.200" width="21.400" height="21.400" rx="3.200" fill="none" stroke="#4a4a4a" stroke-width="2.300"/><path d="M8.200 5.200v12.400l3-2.800 2.200 4.800 2.200-1-2.200-4.600h4.200z" fill="#4a4a4a"/></svg>
<svg class="b" style="left:2504px;top:1772px" width="24" height="21" viewBox="0 0 24 21"><g fill="none" stroke="#555" stroke-width="1.600"><rect x="0.8" y="0.8" width="4.600" height="7.200" rx="0.800"/><rect x="0.8" y="12" width="4.600" height="7.200" rx="0.800"/><rect x="9.3" y="0.8" width="4.600" height="7.200" rx="0.800"/><rect x="9.3" y="12" width="4.600" height="7.200" rx="0.800"/><rect x="17.7" y="0.8" width="4.600" height="7.200" rx="0.800"/><rect x="17.7" y="12" width="4.600" height="7.200" rx="0.800"/></g></svg>
<svg class="b" style="left:2586px;top:1770px" width="25" height="25" viewBox="0 0 25 25"><rect x="1.100" y="1.100" width="22.600" height="9.400" rx="4.700" fill="none" stroke="#4a4a4a" stroke-width="2.100"/><circle cx="6" cy="5.800" r="2.500" fill="#4a4a4a"/><rect x="0" y="14" width="24.800" height="10.800" rx="5.400" fill="#4a4a4a"/><circle cx="19.200" cy="19.400" r="3.100" fill="#fff"/></svg>
<svg class="b" style="left:2669.5px;top:1770.5px" width="15" height="24" viewBox="0 0 15 24"><rect x="1.100" y="1.100" width="12.600" height="21.200" rx="2.800" fill="#d0d0d0" stroke="#4f4f4f" stroke-width="2"/><path d="M5.400 3.700h4M5 19.800h4.800" stroke="#4f4f4f" stroke-width="1.300" stroke-linecap="round"/></svg>
<svg class="b" style="left:2810.3px;top:1769px" width="27" height="27" viewBox="0 0 27 27"><g fill="none" stroke="#444" stroke-linecap="round"><circle cx="10.400" cy="10.500" r="9" stroke-width="2.600"/><path d="M17.200 17.400l7 6.800" stroke-width="3.300"/><path d="M6.400 10.500h8" stroke-width="2"/></g></svg>
<svg class="b" style="left:2858.3px;top:1769px" width="27" height="27" viewBox="0 0 27 27"><g fill="none" stroke="#444" stroke-linecap="round"><circle cx="10.400" cy="10.500" r="9" stroke-width="2.600"/><path d="M17.200 17.400l7 6.800" stroke-width="3.300"/><path d="M8.600 7.600l2.600-1.400v8.800" stroke-width="1.900" stroke-linejoin="round"/></g></svg>
<svg class="b" style="left:2906.3px;top:1769px" width="27" height="27" viewBox="0 0 27 27"><g fill="none" stroke="#444" stroke-linecap="round"><circle cx="10.400" cy="10.500" r="9" stroke-width="2.600"/><path d="M17.200 17.400l7 6.800" stroke-width="3.300"/><rect x="7" y="7.100" width="6.800" height="6.800" rx="1.400" stroke-width="2.100"/></g></svg>
<svg class="b" style="left:2954.3px;top:1769px" width="27" height="27" viewBox="0 0 27 27"><g fill="none" stroke="#444" stroke-linecap="round"><circle cx="10.400" cy="10.500" r="9" stroke-width="2.600"/><path d="M17.200 17.400l7 6.800" stroke-width="3.300"/><path d="M6.400 10.500h8M10.400 6.500v8" stroke-width="2"/></g></svg>
<svg class="b" style="left:775px;top:1852px" width="30" height="18" viewBox="0 0 30 18"><path d="M3 0h17.800c1.200 0 2 .5 2.700 1.500l5.600 6.700a1.300 1.300 0 0 1 0 1.600l-5.600 6.700c-.7 1-1.500 1.500-2.700 1.500H3a3 3 0 0 1-3-3V3a3 3 0 0 1 3-3z" fill="#3478f6"/></svg>
<div class="b" style="left:820px;top:1849px;width:2px;height:24px;background:#e2e2e2;"></div>
<div class="b" style="left:1062px;top:1849px;width:2px;height:24px;background:#e2e2e2;"></div>
<div class="b" style="left:1304px;top:1849px;width:2px;height:24px;background:#e2e2e2;"></div>
<svg class="b" style="left:843px;top:1848px" width="19" height="26" viewBox="0 0 19 26"><g fill="none" stroke="#707070" stroke-width="1.800"><rect x="1" y="1" width="4.200" height="24" rx="1.600"/><rect x="12.600" y="1" width="4.200" height="24" rx="1.600"/></g></svg>
<svg class="b" style="left:898.5px;top:1851px" width="28" height="24" viewBox="0 0 28 24"><g fill="none" stroke="#b9b9b9" stroke-width="1.900" stroke-linejoin="miter"><path d="M1.400 13.400 13.400 2.400l11.800 11"/><path d="M17.600 13.600h7.800V5.800"/><rect x="5.600" y="17.200" width="15.400" height="4.600"/></g></svg>
<svg class="b" style="left:962px;top:1848px" width="20" height="27" viewBox="0 0 20 27"><g fill="none" stroke="#b9b9b9" stroke-width="1.900"><path d="M10 0.400v16.400M3.200 10.400 10 17l6.800-6.600"/><rect x="2" y="20.200" width="16" height="4.600"/></g></svg>
<svg class="b" style="left:1022px;top:1848px" width="20" height="27" viewBox="0 0 20 27"><g fill="none" stroke="#b9b9b9" stroke-width="1.900"><path d="M10 17.600V1.400M3.200 7.800 10 1.200l6.800 6.600"/><rect x="2" y="20.200" width="16" height="4.600"/></g></svg>
<svg class="b" style="left:1082.5px;top:1847.5px" width="24" height="28" viewBox="0 0 24 28"><g fill="none" stroke="#757575" stroke-width="1.900" stroke-linejoin="round"><path d="M9.600 10.800 21.400 5.400v15.200L9.600 26z"/><path d="M5.200 22.600V7.600l11.200-5.200"/><path d="M1 20.200V5.200l11.200-5"/></g></svg>
<svg class="b" style="left:1140.5px;top:1847.5px" width="28" height="28" viewBox="0 0 28 28"><g fill="none" stroke="#757575" stroke-width="1.900"><circle cx="5.400" cy="5.200" r="3.600"/><circle cx="21.600" cy="13.500" r="3.600"/><circle cx="5.400" cy="21.700" r="3.600"/><path d="M8.700 6.900l9.600 4.900M8.700 20l9.600-4.900"/></g></svg>
<svg class="b" style="left:1202.5px;top:1848px" width="23" height="26" viewBox="0 0 23 26"><g fill="none" stroke="#757575" stroke-width="1.900"><rect x="1" y="1" width="20.400" height="9.600" rx="4.800"/><rect x="1" y="15" width="20.400" height="9.600" rx="4.800"/></g><circle cx="6.400" cy="5.800" r="2.500" fill="#757575"/><circle cx="16.200" cy="19.800" r="2.500" fill="#757575"/></svg>
<svg class="b" style="left:1261px;top:1847.5px" width="27" height="27" viewBox="0 0 27 27"><path d="M1.400 10.800 25 1.400 14.600 25.200 12.400 13z" fill="none" stroke="#757575" stroke-width="1.900" stroke-linejoin="round"/></svg>
<svg class="b" style="left:1324px;top:1849px" width="23" height="23" viewBox="0 0 23 23"><rect width="23" height="23" rx="4.2" fill="#7d7d7d"/><g fill="none" stroke="#fff" stroke-width="1.6" stroke-linecap="round"><path d="M12.7 5.3 7.3 14.6M6.3 16.3l-.6 1M10.1 5.5l7.1 11.8M4.5 14h8M15.4 14h3.2"/></g></svg>
<div class="b" style="left:2954px;top:1849px;width:2px;height:24px;background:#e2e2e2;"></div>
<svg class="b" style="left:2973px;top:1848px" width="26" height="26" viewBox="0 0 26 26"><rect x="1.100" y="1.100" width="23.800" height="23.800" rx="4.400" fill="none" stroke="#7d7d7d" stroke-width="2"/><rect x="4" y="16" width="18" height="6" rx="1.600" fill="#7d7d7d"/></svg>
</body></html>
